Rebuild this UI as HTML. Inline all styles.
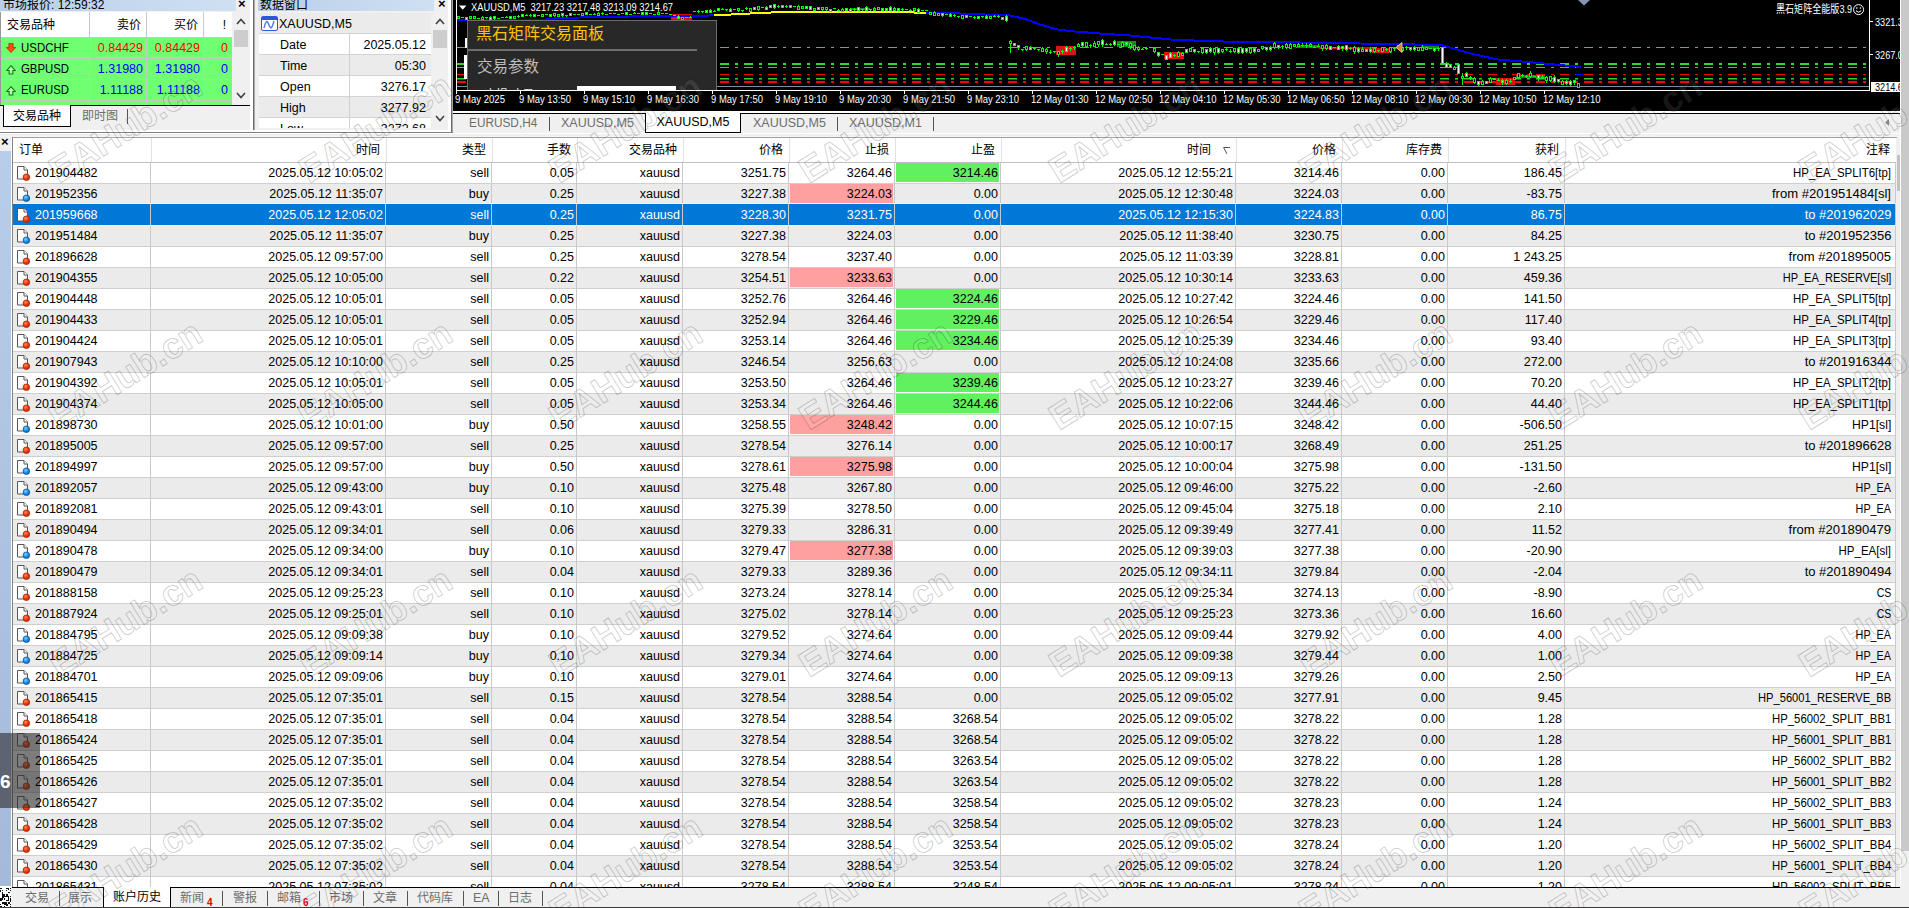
<!DOCTYPE html>
<html lang="zh-CN">
<head>
<meta charset="utf-8">
<title>MetaTrader 4 - 账户历史</title>
<style>
*{box-sizing:border-box;margin:0;padding:0}
html,body{width:1909px;height:908px;overflow:hidden;background:#f0f0f0}
body{position:relative;font-family:"Liberation Sans","Noto Sans CJK SC",sans-serif;font-size:12px;color:#000}
.abs{position:absolute}
i{font-style:normal}
/* ---------- market watch ---------- */
#mw{position:absolute;left:0;top:0;width:250px;height:128px;background:#f0f0f0;overflow:hidden}
.ttl{position:absolute;top:0;height:11px;background:linear-gradient(90deg,#b9cfe8,#cfe0f2);overflow:hidden}
.ttl span{position:absolute;left:3px;top:-3px;font-size:12px;line-height:16px;white-space:nowrap}
.xbtn{position:absolute;font-size:13px;font-weight:bold;line-height:10px;top:-1px;font-family:"Liberation Sans",sans-serif}
#mwt{position:absolute;left:1px;top:12px;width:231px;height:93px;background:#70ff70;overflow:hidden}
#mwt .h{position:absolute;left:0;top:0;width:231px;height:25px;background:#fff}
#mwt .v{position:absolute;top:0;width:1px;height:93px;background:#c8c8c8}
#mwt .hl{position:absolute;left:0;width:231px;height:1px;background:#c8c8c8}
#mwt span{position:absolute;white-space:nowrap;line-height:20px;font-size:12.5px}
#mwt .h span{font-size:12px;line-height:26px}
.red{color:#ff0000}.blu{color:#0000ff}
.sb{position:absolute;background:#f0f0f0}
.sb .th{position:absolute;left:2px;width:14px;background:#cdcdcd}
.sb svg{position:absolute;left:4px}
.tabs{position:absolute;font-size:12px;white-space:nowrap;line-height:20px}
.tabs .t{position:absolute;top:0;color:#6d6d6d;line-height:inherit}
.tabs .a{position:absolute;background:#fff;border:1px solid #000;border-top:none;color:#000;text-align:center;line-height:20px}
.tabs .sp{position:absolute;width:1px;background:#555;}
/* ---------- data window ---------- */
#dw{position:absolute;left:258px;top:0;width:190px;height:128px;overflow:hidden}
#dwt{position:absolute;left:1px;top:13px;width:172px;height:115px;background:#fff;overflow:hidden}
#dwt .rw{position:absolute;left:0;width:172px;height:21px;border-bottom:1px solid #d4d4d4}
#dwt .rw.g{background:#ebebeb}
#dwt .rw span{position:absolute;line-height:22px;font-size:12.5px;white-space:nowrap}
#dwt .vv{position:absolute;left:90px;top:21px;width:1px;height:100px;background:#d0d0d0}
/* ---------- chart ---------- */
#ch{position:absolute;left:453px;top:0;width:1447px;height:111px;background:#000;overflow:hidden}
#ch svg{position:absolute;left:0;top:0}
#pnl{position:absolute;left:14px;top:20px;width:250px;height:70px;background:#282828;border:1px solid #6a6a6a;border-bottom:none;overflow:hidden}
#pnl .t1{position:absolute;left:8px;top:2px;font-size:16px;line-height:22px;color:#ffc400;white-space:nowrap;letter-spacing:0}
#pnl .ln{position:absolute;left:0;top:28px;width:229px;height:2px;background:#6e6e6e}
#pnl .t2{position:absolute;left:9px;top:35px;font-size:15.5px;line-height:22px;color:#bdbdbd;white-space:nowrap}
#pnl .wb{position:absolute;left:109px;top:65px;width:99px;height:6px;background:#fff}
/* ---------- table ---------- */
#tb{position:absolute;left:13px;top:138px;width:1883px;height:749px;background:#fff;overflow:hidden}
.hd{position:absolute;left:0;top:0;width:1883px;height:25px;background:#fff;border-bottom:1px solid #c0c0c0}
.hc{position:absolute;top:0;height:24px;border-right:1px solid #e2e2e2;text-align:right;padding-right:6px;line-height:25px;font-size:12px;white-space:nowrap}
.hc.l{text-align:left;padding-left:6px}
.r{position:absolute;left:0;width:1883px;height:21px;border-bottom:1px solid #cfcfcf;background:#fff}
.r.g{background:#ebebeb}
.r.sel{background:#0078d7;color:#fff;margin-top:-2px;height:23px;border-top:1px solid #f4f0ee;border-bottom:1px solid #f4f0ee}
.r.sel .c{height:21px;padding-top:1px}
.r.sel .ic{top:3px}
.c{position:absolute;top:0;height:20px;border-right:1px solid #c9c9c9;text-align:right;padding-right:2px;line-height:20px;font-size:12.5px;white-space:nowrap;overflow:hidden}
.r.sel .c{border-right-color:#c8c8c8}
.c.o{text-align:left;padding-left:22px}
.c.pk{box-shadow:inset 0 0 0 1px transparent}
.c.pk::before,.c.gn::before{content:"";position:absolute;left:1px;right:1px;top:0;bottom:1px;z-index:0}
.c.pk::before{background:#ffa0a0}
.c.gn::before{background:#60f060}
.c span{position:relative;z-index:1}
.c.cm{padding-right:4px}.c.cm span{display:inline-block;transform-origin:100% 50%}.sx{display:inline-block;transform-origin:0 50%}
.ic{position:absolute;left:3px;top:2px;width:16px;height:16px}
.srt{position:absolute;right:5px;top:9px;width:8px;height:8px}
/* ---------- bottom tabs ---------- */
#bt{position:absolute;left:0;top:887px;width:1909px;height:21px;background:#f0f0f0}
</style>
</head>
<body>
<svg width="0" height="0" style="position:absolute"><defs>
<linearGradient id="pg" x1="0" y1="0" x2="1" y2="1"><stop offset="0.45" stop-color="#fff"/><stop offset="1" stop-color="#dcdcdc"/></linearGradient>
<radialGradient id="rb" cx=".38" cy=".32" r=".7"><stop offset="0" stop-color="#ff8a5a"/><stop offset=".55" stop-color="#ec3c0c"/><stop offset="1" stop-color="#b82400"/></radialGradient>
<radialGradient id="bb" cx=".38" cy=".32" r=".7"><stop offset="0" stop-color="#7fd0ff"/><stop offset=".55" stop-color="#1c92ec"/><stop offset="1" stop-color="#0b5cae"/></radialGradient>
</defs></svg>

<!-- market watch -->
<div id="mw">
  <div class="ttl" style="left:0;width:236px"><span>市场报价: 12:59:32</span></div>
  <div class="xbtn" style="left:238px">×</div>
  <div id="mwt">
    <div class="h"></div>
    <div class="hl" style="top:25px"></div><div class="hl" style="top:46px"></div><div class="hl" style="top:67px"></div><div class="hl" style="top:88px"></div>
    <div class="v" style="left:88px"></div><div class="v" style="left:145px"></div><div class="v" style="left:202px"></div>
    <div class="h" style="background:none"><span style="left:6px">交易品种</span><span style="right:91px">卖价</span><span style="right:34px">买价</span><span style="right:6px">!</span></div>
    <span class="sx" style="left:20px;top:26px;transform:scaleX(.915)">USDCHF</span><span class="red" style="right:89px;top:26px">0.84429</span><span class="red" style="right:32px;top:26px">0.84429</span><span class="red" style="right:4px;top:26px">0</span>
    <span class="sx" style="left:20px;top:47px;transform:scaleX(.91)">GBPUSD</span><span class="blu" style="right:89px;top:47px">1.31980</span><span class="blu" style="right:32px;top:47px">1.31980</span><span class="blu" style="right:4px;top:47px">0</span>
    <span class="sx" style="left:20px;top:68px;transform:scaleX(.91)">EURUSD</span><span class="blu" style="right:89px;top:68px">1.11188</span><span class="blu" style="right:32px;top:68px">1.11188</span><span class="blu" style="right:4px;top:68px">0</span>
    <svg class="abs" style="left:5px;top:31px" width="10" height="10" viewBox="0 0 12 12"><path d="M3.5 0.5h5v5h3L6 11.5 0.5 5.5h3z" fill="#ff4a1a" stroke="#c02000" stroke-width="1"/></svg>
    <svg class="abs" style="left:5px;top:53px" width="10" height="10" viewBox="0 0 12 12"><path d="M6 0.8 11 6.5H8.2v4.2H3.8V6.5H1z" fill="#b6ffb6" stroke="#0a7a0a" stroke-width="1.3"/></svg>
    <svg class="abs" style="left:5px;top:74px" width="10" height="10" viewBox="0 0 12 12"><path d="M6 0.8 11 6.5H8.2v4.2H3.8V6.5H1z" fill="#b6ffb6" stroke="#0a7a0a" stroke-width="1.3"/></svg>
  </div>
  <div class="sb" style="left:232px;top:12px;width:18px;height:93px">
    <svg style="top:6px" width="10" height="7" viewBox="0 0 10 7"><path d="M1 6 5 1.5 9 6" fill="none" stroke="#404040" stroke-width="1.6"/></svg>
    <div class="th" style="top:18px;height:17px"></div>
    <svg style="top:80px" width="10" height="7" viewBox="0 0 10 7"><path d="M1 1 5 5.5 9 1" fill="none" stroke="#404040" stroke-width="1.6"/></svg>
  </div>
  <div class="abs" style="left:0;top:105px;width:250px;height:1px;background:#000"></div>
  <div class="tabs" style="left:0;top:105px;width:250px;height:23px">
    <div class="a" style="left:3px;top:0;width:68px;height:22px;line-height:22px">交易品种</div>
    <div class="t" style="left:82px;line-height:22px">即时图</div>
    <div class="sp" style="left:127px;top:4px;height:15px"></div>
  </div>
</div>
<div class="abs" style="left:0;top:12px;width:1px;height:93px;background:#9a9a9a"></div>
<div class="abs" style="left:250px;top:0;width:3px;height:130px;background:#fff"></div>
<div class="abs" style="left:253px;top:0;width:1px;height:132px;background:#6e6e6e"></div>
<div class="abs" style="left:254px;top:0;width:1px;height:132px;background:#a8a8a8"></div>

<!-- data window -->
<div id="dw">
  <div class="ttl" style="left:0;width:176px"><span style="left:2px">数据窗口</span></div>
  <div class="xbtn" style="left:180px">×</div>
  <div id="dwt">
    <div class="rw g" style="top:0"><span style="left:20px">XAUUSD,M5</span>
      <svg class="abs" style="left:2px;top:3px" width="17" height="15" viewBox="0 0 17 15"><rect x=".5" y=".5" width="16" height="14" rx="1.5" fill="#fff" stroke="#2a5bd7"/><rect x="1" y="1" width="15" height="3" fill="#2a5bd7"/><path d="M3 12c2-8 3-8 5-3s3 3 5-4" fill="none" stroke="#4a7bf0" stroke-width="1.4"/></svg></div>
    <div class="rw" style="top:21px"><span style="left:21px">Date</span><span style="right:5px">2025.05.12</span></div>
    <div class="rw g" style="top:42px"><span style="left:21px">Time</span><span style="right:5px">05:30</span></div>
    <div class="rw" style="top:63px"><span style="left:21px">Open</span><span style="right:5px">3276.17</span></div>
    <div class="rw g" style="top:84px"><span style="left:21px">High</span><span style="right:5px">3277.92</span></div>
    <div class="rw" style="top:105px"><span style="left:21px">Low</span><span style="right:5px">3272.68</span></div>
    <div class="vv"></div>
  </div>
  <div class="sb" style="left:173px;top:12px;width:17px;height:116px">
    <svg style="top:6px" width="10" height="7" viewBox="0 0 10 7"><path d="M1 6 5 1.5 9 6" fill="none" stroke="#404040" stroke-width="1.6"/></svg>
    <div class="th" style="top:18px;height:18px"></div>
    <svg style="top:103px" width="10" height="7" viewBox="0 0 10 7"><path d="M1 1 5 5.5 9 1" fill="none" stroke="#404040" stroke-width="1.6"/></svg>
  </div>
</div>
<div class="abs" style="left:448px;top:0;width:3px;height:130px;background:#fff"></div>
<div class="abs" style="left:451px;top:0;width:1px;height:132px;background:#6e6e6e"></div>
<div class="abs" style="left:452px;top:0;width:1px;height:132px;background:#a8a8a8"></div>
<div class="abs" style="left:0;top:130px;width:451px;height:2px;background:#fff"></div>
<div class="abs" style="left:0;top:132px;width:453px;height:1px;background:#808080"></div>

<!-- chart -->
<div id="ch">
<svg width="1447" height="111" viewBox="0 0 1447 111" shape-rendering="crispEdges" font-family="Liberation Sans, Noto Sans CJK SC, sans-serif">
<line x1="267" y1="47.5" x2="1414" y2="47.5" stroke="#32d232" stroke-width="1" stroke-dasharray="9 6 3 6"/>
<line x1="267" y1="64" x2="1414" y2="64" stroke="#32d232" stroke-width="2" stroke-dasharray="9 6 3 6"/>
<line x1="267" y1="67.5" x2="1414" y2="67.5" stroke="#32d232" stroke-width="1" stroke-dasharray="9 6 3 6"/>
<line x1="267" y1="74.5" x2="1414" y2="74.5" stroke="#ff0000" stroke-width="1" stroke-dasharray="9 6 3 6"/>
<line x1="267" y1="78.5" x2="1414" y2="78.5" stroke="#32d232" stroke-width="1" stroke-dasharray="9 6 3 6"/>
<line x1="267" y1="79.5" x2="1414" y2="79.5" stroke="#ff0000" stroke-width="1" stroke-dasharray="9 6 3 6"/>
<line x1="267" y1="82" x2="1414" y2="82" stroke="#ff0000" stroke-width="2" stroke-dasharray="9 6 3 6"/>
<line x1="4" y1="47.5" x2="13" y2="47.5" stroke="#32d232" stroke-width="1"/>
<line x1="4" y1="64" x2="13" y2="64" stroke="#32d232" stroke-width="2"/>
<line x1="4" y1="67.5" x2="13" y2="67.5" stroke="#32d232" stroke-width="1"/>
<line x1="4" y1="74.5" x2="13" y2="74.5" stroke="#ff0000" stroke-width="1"/>
<line x1="4" y1="78.5" x2="13" y2="78.5" stroke="#32d232" stroke-width="1"/>
<line x1="4" y1="79.5" x2="13" y2="79.5" stroke="#ff0000" stroke-width="1"/>
<line x1="4" y1="82" x2="13" y2="82" stroke="#ff0000" stroke-width="2"/>
<rect x="12" y="38" width="3" height="10" fill="#fff"/><rect x="11" y="55" width="4" height="24" fill="#fff"/>
<line x1="4" y1="86.5" x2="1416" y2="86.5" stroke="#7f8fa6" stroke-width="1"/>
<rect x="218.0" y="14" width="21.0" height="6.5" fill="#e01010"/>
<rect x="603.0" y="46" width="20.0" height="9.0" fill="#d81414"/>
<rect x="664.0" y="40.5" width="19.0" height="6.0" fill="#168a16"/>
<rect x="711.0" y="52" width="20.0" height="6.5" fill="#e01010"/>
<rect x="844.0" y="44.5" width="22.0" height="3.0" fill="#168a16"/>
<rect x="866.0" y="47" width="53.0" height="1.5" fill="#d01010"/>
<rect x="919.0" y="47.5" width="20.0" height="5.0" fill="#e01010"/>
<rect x="968.0" y="45" width="18.0" height="4.0" fill="#168a16"/>
<rect x="1043.0" y="78" width="19.0" height="6.5" fill="#e01010"/>
<rect x="1063.0" y="74.5" width="29.0" height="3.0" fill="#168a16"/>
<rect x="398.0" y="8" width="19.0" height="2.0" fill="#168a16"/>
<polyline points="3.0,19.5 92.0,19.5 107.0,18.0 147.0,17.0 197.0,16.2 247.0,15.7 261.0,15.4" fill="none" stroke="#0000ff" stroke-width="2"/>
<polyline points="261.0,15.4 287.0,14.0 322.0,12.3 397.0,12.0 473.0,12.6" fill="none" stroke="#ffff00" stroke-width="2"/>
<polyline points="473.0,12.6 507.0,13.5 557.0,15.5 572.0,19.0 587.0,24.5 603.0,29.3 622.0,31.5 647.0,33.5 677.0,35.5 721.0,39.8 784.0,42.0 847.0,42.5 907.0,43.5 967.0,44.6 987.0,44.8 1002.0,49.0 1018.0,53.6 1044.0,59.4 1077.0,62.2 1105.0,64.8 1128.0,67.0" fill="none" stroke="#0000ff" stroke-width="2"/>
<line x1="1123" y1="74.5" x2="1131" y2="74.5" stroke="#0000ff" stroke-width="1.4"/>
<line x1="5.5" y1="16.7" x2="5.5" y2="18.7" stroke="#00ff00" stroke-width="1"/>
<rect x="4.5" y="16.7" width="2" height="2.0" fill="#000" stroke="#00ff00" stroke-width="1"/>
<line x1="9.5" y1="17.4" x2="9.5" y2="18.4" stroke="#00ff00" stroke-width="1"/>
<line x1="8.0" y1="17.9" x2="11.0" y2="17.9" stroke="#00ff00" stroke-width="1"/>
<line x1="13.5" y1="17.1" x2="13.5" y2="20.1" stroke="#00ff00" stroke-width="1"/>
<rect x="12.5" y="17.1" width="2" height="2.0" fill="#fff" stroke="#00ff00" stroke-width="1"/>
<line x1="17.5" y1="16.9" x2="17.5" y2="18.9" stroke="#00ff00" stroke-width="1"/>
<rect x="16.5" y="16.9" width="2" height="2.0" fill="#000" stroke="#00ff00" stroke-width="1"/>
<line x1="21.5" y1="16.7" x2="21.5" y2="18.7" stroke="#00ff00" stroke-width="1"/>
<rect x="20.5" y="16.7" width="2" height="2.0" fill="#000" stroke="#00ff00" stroke-width="1"/>
<line x1="25.5" y1="17.5" x2="25.5" y2="18.5" stroke="#00ff00" stroke-width="1"/>
<line x1="24.0" y1="18.0" x2="27.0" y2="18.0" stroke="#00ff00" stroke-width="1"/>
<line x1="29.5" y1="16.1" x2="29.5" y2="19.1" stroke="#00ff00" stroke-width="1"/>
<rect x="28.5" y="17.1" width="2" height="2.0" fill="#000" stroke="#00ff00" stroke-width="1"/>
<line x1="33.5" y1="17.2" x2="33.5" y2="19.2" stroke="#00ff00" stroke-width="1"/>
<line x1="32.0" y1="17.7" x2="35.0" y2="17.7" stroke="#00ff00" stroke-width="1"/>
<line x1="37.5" y1="16.2" x2="37.5" y2="20.2" stroke="#00ff00" stroke-width="1"/>
<rect x="36.5" y="17.2" width="2" height="2.0" fill="#fff" stroke="#00ff00" stroke-width="1"/>
<line x1="41.5" y1="16.6" x2="41.5" y2="19.6" stroke="#00ff00" stroke-width="1"/>
<rect x="40.5" y="16.6" width="2" height="2.0" fill="#fff" stroke="#00ff00" stroke-width="1"/>
<line x1="45.5" y1="17.9" x2="45.5" y2="18.9" stroke="#00ff00" stroke-width="1"/>
<line x1="44.0" y1="18.4" x2="47.0" y2="18.4" stroke="#00ff00" stroke-width="1"/>
<line x1="49.5" y1="17.2" x2="49.5" y2="18.2" stroke="#00ff00" stroke-width="1"/>
<line x1="48.0" y1="17.7" x2="51.0" y2="17.7" stroke="#00ff00" stroke-width="1"/>
<line x1="53.5" y1="16.1" x2="53.5" y2="18.1" stroke="#00ff00" stroke-width="1"/>
<line x1="52.0" y1="17.6" x2="55.0" y2="17.6" stroke="#00ff00" stroke-width="1"/>
<line x1="57.5" y1="16.0" x2="57.5" y2="18.0" stroke="#00ff00" stroke-width="1"/>
<rect x="56.5" y="16.0" width="2" height="2.0" fill="#fff" stroke="#00ff00" stroke-width="1"/>
<line x1="61.5" y1="16.0" x2="61.5" y2="19.0" stroke="#00ff00" stroke-width="1"/>
<rect x="60.5" y="16.0" width="2" height="2.0" fill="#000" stroke="#00ff00" stroke-width="1"/>
<line x1="65.5" y1="14.6" x2="65.5" y2="17.6" stroke="#00ff00" stroke-width="1"/>
<line x1="64.0" y1="16.1" x2="67.0" y2="16.1" stroke="#00ff00" stroke-width="1"/>
<line x1="69.5" y1="14.6" x2="69.5" y2="16.6" stroke="#00ff00" stroke-width="1"/>
<rect x="68.5" y="14.6" width="2" height="2.0" fill="#fff" stroke="#00ff00" stroke-width="1"/>
<line x1="73.5" y1="13.9" x2="73.5" y2="15.9" stroke="#00ff00" stroke-width="1"/>
<line x1="72.0" y1="15.4" x2="75.0" y2="15.4" stroke="#00ff00" stroke-width="1"/>
<line x1="77.5" y1="13.7" x2="77.5" y2="16.7" stroke="#00ff00" stroke-width="1"/>
<line x1="76.0" y1="15.2" x2="79.0" y2="15.2" stroke="#00ff00" stroke-width="1"/>
<line x1="81.5" y1="14.3" x2="81.5" y2="16.3" stroke="#00ff00" stroke-width="1"/>
<rect x="80.5" y="14.3" width="2" height="2.0" fill="#fff" stroke="#00ff00" stroke-width="1"/>
<line x1="85.5" y1="14.8" x2="85.5" y2="15.8" stroke="#00ff00" stroke-width="1"/>
<line x1="84.0" y1="15.3" x2="87.0" y2="15.3" stroke="#00ff00" stroke-width="1"/>
<line x1="89.5" y1="14.1" x2="89.5" y2="16.1" stroke="#00ff00" stroke-width="1"/>
<rect x="88.5" y="14.1" width="2" height="2.0" fill="#000" stroke="#00ff00" stroke-width="1"/>
<line x1="93.5" y1="14.3" x2="93.5" y2="15.3" stroke="#00ff00" stroke-width="1"/>
<line x1="92.0" y1="14.8" x2="95.0" y2="14.8" stroke="#00ff00" stroke-width="1"/>
<line x1="97.5" y1="14.1" x2="97.5" y2="16.1" stroke="#00ff00" stroke-width="1"/>
<rect x="96.5" y="14.1" width="2" height="2.0" fill="#fff" stroke="#00ff00" stroke-width="1"/>
<line x1="101.5" y1="13.5" x2="101.5" y2="16.5" stroke="#00ff00" stroke-width="1"/>
<rect x="100.5" y="13.5" width="2" height="2.0" fill="#000" stroke="#00ff00" stroke-width="1"/>
<line x1="105.5" y1="14.0" x2="105.5" y2="17.0" stroke="#00ff00" stroke-width="1"/>
<rect x="104.5" y="14.0" width="2" height="2.0" fill="#000" stroke="#00ff00" stroke-width="1"/>
<line x1="109.5" y1="12.9" x2="109.5" y2="16.9" stroke="#00ff00" stroke-width="1"/>
<rect x="108.5" y="13.9" width="2" height="2.0" fill="#fff" stroke="#00ff00" stroke-width="1"/>
<line x1="113.5" y1="14.5" x2="113.5" y2="16.5" stroke="#00ff00" stroke-width="1"/>
<line x1="112.0" y1="15.0" x2="115.0" y2="15.0" stroke="#00ff00" stroke-width="1"/>
<line x1="117.5" y1="13.2" x2="117.5" y2="15.2" stroke="#00ff00" stroke-width="1"/>
<rect x="116.5" y="13.2" width="2" height="2.0" fill="#fff" stroke="#00ff00" stroke-width="1"/>
<line x1="121.5" y1="13.9" x2="121.5" y2="14.9" stroke="#00ff00" stroke-width="1"/>
<line x1="120.0" y1="14.4" x2="123.0" y2="14.4" stroke="#00ff00" stroke-width="1"/>
<line x1="125.5" y1="13.9" x2="125.5" y2="14.9" stroke="#00ff00" stroke-width="1"/>
<line x1="124.0" y1="14.4" x2="127.0" y2="14.4" stroke="#00ff00" stroke-width="1"/>
<line x1="129.5" y1="13.3" x2="129.5" y2="16.3" stroke="#00ff00" stroke-width="1"/>
<rect x="128.5" y="13.3" width="2" height="2.0" fill="#000" stroke="#00ff00" stroke-width="1"/>
<line x1="133.5" y1="12.9" x2="133.5" y2="14.9" stroke="#00ff00" stroke-width="1"/>
<rect x="132.5" y="12.9" width="2" height="2.0" fill="#fff" stroke="#00ff00" stroke-width="1"/>
<line x1="137.5" y1="14.0" x2="137.5" y2="15.0" stroke="#00ff00" stroke-width="1"/>
<line x1="136.0" y1="14.5" x2="139.0" y2="14.5" stroke="#00ff00" stroke-width="1"/>
<line x1="141.5" y1="12.8" x2="141.5" y2="14.8" stroke="#00ff00" stroke-width="1"/>
<line x1="140.0" y1="14.3" x2="143.0" y2="14.3" stroke="#00ff00" stroke-width="1"/>
<line x1="145.5" y1="12.0" x2="145.5" y2="15.0" stroke="#00ff00" stroke-width="1"/>
<rect x="144.5" y="13.0" width="2" height="2.0" fill="#000" stroke="#00ff00" stroke-width="1"/>
<line x1="149.5" y1="12.2" x2="149.5" y2="15.2" stroke="#00ff00" stroke-width="1"/>
<line x1="148.0" y1="13.7" x2="151.0" y2="13.7" stroke="#00ff00" stroke-width="1"/>
<line x1="153.5" y1="13.6" x2="153.5" y2="14.6" stroke="#00ff00" stroke-width="1"/>
<line x1="152.0" y1="14.1" x2="155.0" y2="14.1" stroke="#00ff00" stroke-width="1"/>
<line x1="157.5" y1="13.3" x2="157.5" y2="14.3" stroke="#00ff00" stroke-width="1"/>
<line x1="156.0" y1="13.8" x2="159.0" y2="13.8" stroke="#00ff00" stroke-width="1"/>
<line x1="161.5" y1="13.3" x2="161.5" y2="14.3" stroke="#00ff00" stroke-width="1"/>
<line x1="160.0" y1="13.8" x2="163.0" y2="13.8" stroke="#00ff00" stroke-width="1"/>
<line x1="165.5" y1="13.5" x2="165.5" y2="14.5" stroke="#00ff00" stroke-width="1"/>
<line x1="164.0" y1="14.0" x2="167.0" y2="14.0" stroke="#00ff00" stroke-width="1"/>
<line x1="169.5" y1="12.9" x2="169.5" y2="13.9" stroke="#00ff00" stroke-width="1"/>
<line x1="168.0" y1="13.4" x2="171.0" y2="13.4" stroke="#00ff00" stroke-width="1"/>
<line x1="173.5" y1="11.5" x2="173.5" y2="14.5" stroke="#00ff00" stroke-width="1"/>
<rect x="172.5" y="12.5" width="2" height="2.0" fill="#fff" stroke="#00ff00" stroke-width="1"/>
<line x1="177.5" y1="13.5" x2="177.5" y2="14.5" stroke="#00ff00" stroke-width="1"/>
<line x1="176.0" y1="14.0" x2="179.0" y2="14.0" stroke="#00ff00" stroke-width="1"/>
<line x1="181.5" y1="12.0" x2="181.5" y2="14.0" stroke="#00ff00" stroke-width="1"/>
<line x1="180.0" y1="13.5" x2="183.0" y2="13.5" stroke="#00ff00" stroke-width="1"/>
<line x1="185.5" y1="13.1" x2="185.5" y2="14.1" stroke="#00ff00" stroke-width="1"/>
<line x1="184.0" y1="13.6" x2="187.0" y2="13.6" stroke="#00ff00" stroke-width="1"/>
<line x1="189.5" y1="12.4" x2="189.5" y2="14.4" stroke="#00ff00" stroke-width="1"/>
<rect x="188.5" y="12.4" width="2" height="2.0" fill="#fff" stroke="#00ff00" stroke-width="1"/>
<line x1="193.5" y1="12.2" x2="193.5" y2="15.2" stroke="#00ff00" stroke-width="1"/>
<rect x="192.5" y="12.2" width="2" height="2.0" fill="#fff" stroke="#00ff00" stroke-width="1"/>
<line x1="197.5" y1="13.0" x2="197.5" y2="14.0" stroke="#00ff00" stroke-width="1"/>
<line x1="196.0" y1="13.5" x2="199.0" y2="13.5" stroke="#00ff00" stroke-width="1"/>
<line x1="201.5" y1="13.5" x2="201.5" y2="14.5" stroke="#00ff00" stroke-width="1"/>
<line x1="200.0" y1="14.0" x2="203.0" y2="14.0" stroke="#00ff00" stroke-width="1"/>
<line x1="205.5" y1="11.3" x2="205.5" y2="14.3" stroke="#00ff00" stroke-width="1"/>
<rect x="204.5" y="12.3" width="2" height="2.0" fill="#000" stroke="#00ff00" stroke-width="1"/>
<line x1="209.5" y1="13.0" x2="209.5" y2="14.0" stroke="#00ff00" stroke-width="1"/>
<line x1="208.0" y1="13.5" x2="211.0" y2="13.5" stroke="#00ff00" stroke-width="1"/>
<line x1="213.5" y1="13.0" x2="213.5" y2="14.0" stroke="#00ff00" stroke-width="1"/>
<line x1="212.0" y1="13.5" x2="215.0" y2="13.5" stroke="#00ff00" stroke-width="1"/>
<line x1="217.5" y1="13.5" x2="217.5" y2="14.5" stroke="#00ff00" stroke-width="1"/>
<line x1="216.0" y1="14.0" x2="219.0" y2="14.0" stroke="#00ff00" stroke-width="1"/>
<line x1="221.5" y1="15.0" x2="221.5" y2="16.0" stroke="#00ff00" stroke-width="1"/>
<line x1="220.0" y1="15.5" x2="223.0" y2="15.5" stroke="#00ff00" stroke-width="1"/>
<line x1="225.5" y1="15.4" x2="225.5" y2="18.4" stroke="#00ff00" stroke-width="1"/>
<rect x="224.5" y="16.4" width="2" height="2.0" fill="#fff" stroke="#00ff00" stroke-width="1"/>
<line x1="229.5" y1="17.0" x2="229.5" y2="19.0" stroke="#00ff00" stroke-width="1"/>
<rect x="228.5" y="17.0" width="2" height="2.0" fill="#000" stroke="#00ff00" stroke-width="1"/>
<line x1="233.5" y1="16.5" x2="233.5" y2="17.5" stroke="#00ff00" stroke-width="1"/>
<line x1="232.0" y1="17.0" x2="235.0" y2="17.0" stroke="#00ff00" stroke-width="1"/>
<line x1="237.5" y1="15.5" x2="237.5" y2="17.5" stroke="#00ff00" stroke-width="1"/>
<line x1="236.0" y1="17.0" x2="239.0" y2="17.0" stroke="#00ff00" stroke-width="1"/>
<line x1="241.5" y1="10.7" x2="241.5" y2="11.7" stroke="#00ff00" stroke-width="1"/>
<line x1="240.0" y1="11.2" x2="243.0" y2="11.2" stroke="#00ff00" stroke-width="1"/>
<line x1="245.5" y1="9.6" x2="245.5" y2="12.6" stroke="#00ff00" stroke-width="1"/>
<line x1="244.0" y1="11.1" x2="247.0" y2="11.1" stroke="#00ff00" stroke-width="1"/>
<line x1="249.5" y1="11.2" x2="249.5" y2="13.2" stroke="#00ff00" stroke-width="1"/>
<line x1="248.0" y1="11.7" x2="251.0" y2="11.7" stroke="#00ff00" stroke-width="1"/>
<line x1="253.5" y1="10.2" x2="253.5" y2="13.2" stroke="#00ff00" stroke-width="1"/>
<rect x="252.5" y="10.2" width="2" height="2.0" fill="#fff" stroke="#00ff00" stroke-width="1"/>
<line x1="257.5" y1="9.0" x2="257.5" y2="13.0" stroke="#00ff00" stroke-width="1"/>
<rect x="256.5" y="10.0" width="2" height="2.0" fill="#fff" stroke="#00ff00" stroke-width="1"/>
<line x1="261.5" y1="9.6" x2="261.5" y2="11.6" stroke="#00ff00" stroke-width="1"/>
<line x1="260.0" y1="11.1" x2="263.0" y2="11.1" stroke="#00ff00" stroke-width="1"/>
<line x1="265.5" y1="8.7" x2="265.5" y2="10.7" stroke="#00ff00" stroke-width="1"/>
<rect x="264.5" y="8.7" width="2" height="2.0" fill="#fff" stroke="#00ff00" stroke-width="1"/>
<line x1="269.5" y1="8.1" x2="269.5" y2="10.1" stroke="#00ff00" stroke-width="1"/>
<line x1="268.0" y1="9.6" x2="271.0" y2="9.6" stroke="#00ff00" stroke-width="1"/>
<line x1="273.5" y1="9.3" x2="273.5" y2="11.3" stroke="#00ff00" stroke-width="1"/>
<line x1="272.0" y1="9.8" x2="275.0" y2="9.8" stroke="#00ff00" stroke-width="1"/>
<line x1="277.5" y1="8.0" x2="277.5" y2="12.0" stroke="#00ff00" stroke-width="1"/>
<rect x="276.5" y="9.0" width="2" height="2.0" fill="#fff" stroke="#00ff00" stroke-width="1"/>
<line x1="281.5" y1="9.2" x2="281.5" y2="10.2" stroke="#00ff00" stroke-width="1"/>
<line x1="280.0" y1="9.7" x2="283.0" y2="9.7" stroke="#00ff00" stroke-width="1"/>
<line x1="285.5" y1="8.5" x2="285.5" y2="11.5" stroke="#00ff00" stroke-width="1"/>
<rect x="284.5" y="8.5" width="2" height="2.0" fill="#000" stroke="#00ff00" stroke-width="1"/>
<line x1="289.5" y1="9.8" x2="289.5" y2="11.8" stroke="#00ff00" stroke-width="1"/>
<line x1="288.0" y1="10.3" x2="291.0" y2="10.3" stroke="#00ff00" stroke-width="1"/>
<line x1="293.5" y1="7.4" x2="293.5" y2="10.4" stroke="#00ff00" stroke-width="1"/>
<line x1="292.0" y1="8.9" x2="295.0" y2="8.9" stroke="#00ff00" stroke-width="1"/>
<line x1="297.5" y1="8.6" x2="297.5" y2="11.6" stroke="#00ff00" stroke-width="1"/>
<rect x="296.5" y="8.6" width="2" height="3.0" fill="#000" stroke="#00ff00" stroke-width="1"/>
<line x1="301.5" y1="7.8" x2="301.5" y2="9.8" stroke="#00ff00" stroke-width="1"/>
<rect x="300.5" y="7.8" width="2" height="2.0" fill="#fff" stroke="#00ff00" stroke-width="1"/>
<line x1="305.5" y1="5.8" x2="305.5" y2="10.8" stroke="#00ff00" stroke-width="1"/>
<rect x="304.5" y="6.8" width="2" height="3.0" fill="#000" stroke="#00ff00" stroke-width="1"/>
<line x1="309.5" y1="7.1" x2="309.5" y2="8.1" stroke="#00ff00" stroke-width="1"/>
<line x1="308.0" y1="7.6" x2="311.0" y2="7.6" stroke="#00ff00" stroke-width="1"/>
<line x1="313.5" y1="6.3" x2="313.5" y2="10.3" stroke="#00ff00" stroke-width="1"/>
<rect x="312.5" y="7.3" width="2" height="2.0" fill="#fff" stroke="#00ff00" stroke-width="1"/>
<line x1="317.5" y1="5.4" x2="317.5" y2="8.4" stroke="#00ff00" stroke-width="1"/>
<rect x="316.5" y="5.4" width="2" height="2.0" fill="#fff" stroke="#00ff00" stroke-width="1"/>
<line x1="321.5" y1="3.9" x2="321.5" y2="8.9" stroke="#00ff00" stroke-width="1"/>
<rect x="320.5" y="4.9" width="2" height="3.0" fill="#fff" stroke="#00ff00" stroke-width="1"/>
<line x1="325.5" y1="5.3" x2="325.5" y2="8.3" stroke="#00ff00" stroke-width="1"/>
<line x1="324.0" y1="6.8" x2="327.0" y2="6.8" stroke="#00ff00" stroke-width="1"/>
<line x1="329.5" y1="5.4" x2="329.5" y2="8.4" stroke="#00ff00" stroke-width="1"/>
<rect x="328.5" y="5.4" width="2" height="2.0" fill="#fff" stroke="#00ff00" stroke-width="1"/>
<line x1="333.5" y1="5.0" x2="333.5" y2="8.0" stroke="#00ff00" stroke-width="1"/>
<line x1="332.0" y1="6.5" x2="335.0" y2="6.5" stroke="#00ff00" stroke-width="1"/>
<line x1="337.5" y1="5.5" x2="337.5" y2="7.5" stroke="#00ff00" stroke-width="1"/>
<rect x="336.5" y="5.5" width="2" height="2.0" fill="#fff" stroke="#00ff00" stroke-width="1"/>
<line x1="341.5" y1="6.1" x2="341.5" y2="7.1" stroke="#00ff00" stroke-width="1"/>
<line x1="340.0" y1="6.6" x2="343.0" y2="6.6" stroke="#00ff00" stroke-width="1"/>
<line x1="345.5" y1="5.1" x2="345.5" y2="10.1" stroke="#00ff00" stroke-width="1"/>
<rect x="344.5" y="6.1" width="2" height="3.0" fill="#000" stroke="#00ff00" stroke-width="1"/>
<line x1="349.5" y1="5.8" x2="349.5" y2="8.8" stroke="#00ff00" stroke-width="1"/>
<rect x="348.5" y="6.8" width="2" height="2.0" fill="#000" stroke="#00ff00" stroke-width="1"/>
<line x1="353.5" y1="5.7" x2="353.5" y2="8.7" stroke="#00ff00" stroke-width="1"/>
<rect x="352.5" y="6.7" width="2" height="2.0" fill="#fff" stroke="#00ff00" stroke-width="1"/>
<line x1="357.5" y1="5.8" x2="357.5" y2="9.8" stroke="#00ff00" stroke-width="1"/>
<rect x="356.5" y="6.8" width="2" height="3.0" fill="#fff" stroke="#00ff00" stroke-width="1"/>
<line x1="361.5" y1="8.0" x2="361.5" y2="11.0" stroke="#00ff00" stroke-width="1"/>
<rect x="360.5" y="8.0" width="2" height="2.0" fill="#000" stroke="#00ff00" stroke-width="1"/>
<line x1="365.5" y1="6.6" x2="365.5" y2="9.6" stroke="#00ff00" stroke-width="1"/>
<rect x="364.5" y="7.6" width="2" height="2.0" fill="#fff" stroke="#00ff00" stroke-width="1"/>
<line x1="369.5" y1="7.8" x2="369.5" y2="10.8" stroke="#00ff00" stroke-width="1"/>
<rect x="368.5" y="7.8" width="2" height="2.0" fill="#000" stroke="#00ff00" stroke-width="1"/>
<line x1="373.5" y1="7.8" x2="373.5" y2="10.8" stroke="#00ff00" stroke-width="1"/>
<rect x="372.5" y="7.8" width="2" height="2.0" fill="#000" stroke="#00ff00" stroke-width="1"/>
<line x1="377.5" y1="9.3" x2="377.5" y2="12.3" stroke="#00ff00" stroke-width="1"/>
<rect x="376.5" y="9.3" width="2" height="2.0" fill="#fff" stroke="#00ff00" stroke-width="1"/>
<line x1="381.5" y1="8.0" x2="381.5" y2="9.0" stroke="#00ff00" stroke-width="1"/>
<line x1="380.0" y1="8.5" x2="383.0" y2="8.5" stroke="#00ff00" stroke-width="1"/>
<line x1="385.5" y1="8.7" x2="385.5" y2="10.7" stroke="#00ff00" stroke-width="1"/>
<line x1="384.0" y1="10.2" x2="387.0" y2="10.2" stroke="#00ff00" stroke-width="1"/>
<line x1="389.5" y1="8.3" x2="389.5" y2="12.3" stroke="#00ff00" stroke-width="1"/>
<rect x="388.5" y="9.3" width="2" height="2.0" fill="#000" stroke="#00ff00" stroke-width="1"/>
<line x1="393.5" y1="8.2" x2="393.5" y2="11.2" stroke="#00ff00" stroke-width="1"/>
<rect x="392.5" y="8.2" width="2" height="2.0" fill="#fff" stroke="#00ff00" stroke-width="1"/>
<line x1="397.5" y1="8.1" x2="397.5" y2="12.1" stroke="#00ff00" stroke-width="1"/>
<rect x="396.5" y="9.1" width="2" height="2.0" fill="#fff" stroke="#00ff00" stroke-width="1"/>
<line x1="401.5" y1="8.2" x2="401.5" y2="11.2" stroke="#00ff00" stroke-width="1"/>
<line x1="400.0" y1="9.7" x2="403.0" y2="9.7" stroke="#00ff00" stroke-width="1"/>
<line x1="405.5" y1="6.7" x2="405.5" y2="10.7" stroke="#00ff00" stroke-width="1"/>
<rect x="404.5" y="7.7" width="2" height="3.0" fill="#fff" stroke="#00ff00" stroke-width="1"/>
<line x1="409.5" y1="8.6" x2="409.5" y2="10.6" stroke="#00ff00" stroke-width="1"/>
<line x1="408.0" y1="9.1" x2="411.0" y2="9.1" stroke="#00ff00" stroke-width="1"/>
<line x1="413.5" y1="6.3" x2="413.5" y2="11.3" stroke="#00ff00" stroke-width="1"/>
<rect x="412.5" y="7.3" width="2" height="3.0" fill="#fff" stroke="#00ff00" stroke-width="1"/>
<line x1="417.5" y1="9.0" x2="417.5" y2="11.0" stroke="#00ff00" stroke-width="1"/>
<line x1="416.0" y1="9.5" x2="419.0" y2="9.5" stroke="#00ff00" stroke-width="1"/>
<line x1="421.5" y1="7.0" x2="421.5" y2="10.0" stroke="#00ff00" stroke-width="1"/>
<rect x="420.5" y="8.0" width="2" height="2.0" fill="#000" stroke="#00ff00" stroke-width="1"/>
<line x1="425.5" y1="7.4" x2="425.5" y2="10.4" stroke="#00ff00" stroke-width="1"/>
<rect x="424.5" y="7.4" width="2" height="2.0" fill="#000" stroke="#00ff00" stroke-width="1"/>
<line x1="429.5" y1="8.0" x2="429.5" y2="10.0" stroke="#00ff00" stroke-width="1"/>
<rect x="428.5" y="8.0" width="2" height="2.0" fill="#fff" stroke="#00ff00" stroke-width="1"/>
<line x1="433.5" y1="8.5" x2="433.5" y2="10.5" stroke="#00ff00" stroke-width="1"/>
<rect x="432.5" y="8.5" width="2" height="2.0" fill="#fff" stroke="#00ff00" stroke-width="1"/>
<line x1="437.5" y1="6.0" x2="437.5" y2="10.0" stroke="#00ff00" stroke-width="1"/>
<rect x="436.5" y="7.0" width="2" height="3.0" fill="#fff" stroke="#00ff00" stroke-width="1"/>
<line x1="441.5" y1="7.3" x2="441.5" y2="11.3" stroke="#00ff00" stroke-width="1"/>
<rect x="440.5" y="8.3" width="2" height="2.0" fill="#000" stroke="#00ff00" stroke-width="1"/>
<line x1="445.5" y1="8.3" x2="445.5" y2="10.3" stroke="#00ff00" stroke-width="1"/>
<rect x="444.5" y="8.3" width="2" height="2.0" fill="#fff" stroke="#00ff00" stroke-width="1"/>
<line x1="449.5" y1="7.5" x2="449.5" y2="10.5" stroke="#00ff00" stroke-width="1"/>
<line x1="448.0" y1="9.0" x2="451.0" y2="9.0" stroke="#00ff00" stroke-width="1"/>
<line x1="453.5" y1="9.4" x2="453.5" y2="10.4" stroke="#00ff00" stroke-width="1"/>
<line x1="452.0" y1="9.9" x2="455.0" y2="9.9" stroke="#00ff00" stroke-width="1"/>
<line x1="457.5" y1="9.1" x2="457.5" y2="11.1" stroke="#00ff00" stroke-width="1"/>
<line x1="456.0" y1="10.6" x2="459.0" y2="10.6" stroke="#00ff00" stroke-width="1"/>
<line x1="461.5" y1="8.5" x2="461.5" y2="11.5" stroke="#00ff00" stroke-width="1"/>
<rect x="460.5" y="8.5" width="2" height="2.0" fill="#000" stroke="#00ff00" stroke-width="1"/>
<line x1="465.5" y1="8.3" x2="465.5" y2="12.3" stroke="#00ff00" stroke-width="1"/>
<rect x="464.5" y="9.3" width="2" height="3.0" fill="#fff" stroke="#00ff00" stroke-width="1"/>
<line x1="469.5" y1="9.5" x2="469.5" y2="10.5" stroke="#00ff00" stroke-width="1"/>
<line x1="468.0" y1="10.0" x2="471.0" y2="10.0" stroke="#00ff00" stroke-width="1"/>
<line x1="473.5" y1="9.8" x2="473.5" y2="10.8" stroke="#00ff00" stroke-width="1"/>
<line x1="472.0" y1="10.3" x2="475.0" y2="10.3" stroke="#00ff00" stroke-width="1"/>
<line x1="477.5" y1="12.1" x2="477.5" y2="14.1" stroke="#00ff00" stroke-width="1"/>
<rect x="476.5" y="12.1" width="2" height="2.0" fill="#000" stroke="#00ff00" stroke-width="1"/>
<line x1="481.5" y1="11.1" x2="481.5" y2="16.1" stroke="#00ff00" stroke-width="1"/>
<rect x="480.5" y="12.1" width="2" height="3.0" fill="#000" stroke="#00ff00" stroke-width="1"/>
<line x1="485.5" y1="13.2" x2="485.5" y2="16.2" stroke="#00ff00" stroke-width="1"/>
<rect x="484.5" y="13.2" width="2" height="2.0" fill="#000" stroke="#00ff00" stroke-width="1"/>
<line x1="489.5" y1="13.9" x2="489.5" y2="16.9" stroke="#00ff00" stroke-width="1"/>
<rect x="488.5" y="13.9" width="2" height="2.0" fill="#fff" stroke="#00ff00" stroke-width="1"/>
<line x1="493.5" y1="14.1" x2="493.5" y2="15.1" stroke="#00ff00" stroke-width="1"/>
<line x1="492.0" y1="14.6" x2="495.0" y2="14.6" stroke="#00ff00" stroke-width="1"/>
<line x1="497.5" y1="13.0" x2="497.5" y2="16.0" stroke="#00ff00" stroke-width="1"/>
<rect x="496.5" y="14.0" width="2" height="2.0" fill="#fff" stroke="#00ff00" stroke-width="1"/>
<line x1="501.5" y1="14.1" x2="501.5" y2="17.1" stroke="#00ff00" stroke-width="1"/>
<line x1="500.0" y1="15.6" x2="503.0" y2="15.6" stroke="#00ff00" stroke-width="1"/>
<line x1="505.5" y1="16.4" x2="505.5" y2="18.4" stroke="#00ff00" stroke-width="1"/>
<line x1="504.0" y1="16.9" x2="507.0" y2="16.9" stroke="#00ff00" stroke-width="1"/>
<line x1="509.5" y1="15.3" x2="509.5" y2="18.3" stroke="#00ff00" stroke-width="1"/>
<rect x="508.5" y="15.3" width="2" height="3.0" fill="#000" stroke="#00ff00" stroke-width="1"/>
<line x1="513.5" y1="15.9" x2="513.5" y2="17.9" stroke="#00ff00" stroke-width="1"/>
<rect x="512.5" y="15.9" width="2" height="2.0" fill="#fff" stroke="#00ff00" stroke-width="1"/>
<line x1="517.5" y1="16.3" x2="517.5" y2="17.3" stroke="#00ff00" stroke-width="1"/>
<line x1="516.0" y1="16.8" x2="519.0" y2="16.8" stroke="#00ff00" stroke-width="1"/>
<line x1="521.5" y1="15.5" x2="521.5" y2="18.5" stroke="#00ff00" stroke-width="1"/>
<line x1="520.0" y1="17.0" x2="523.0" y2="17.0" stroke="#00ff00" stroke-width="1"/>
<line x1="525.5" y1="16.2" x2="525.5" y2="19.2" stroke="#00ff00" stroke-width="1"/>
<rect x="524.5" y="16.2" width="2" height="2.0" fill="#fff" stroke="#00ff00" stroke-width="1"/>
<line x1="529.5" y1="16.3" x2="529.5" y2="18.3" stroke="#00ff00" stroke-width="1"/>
<line x1="528.0" y1="16.8" x2="531.0" y2="16.8" stroke="#00ff00" stroke-width="1"/>
<line x1="533.5" y1="15.0" x2="533.5" y2="18.0" stroke="#00ff00" stroke-width="1"/>
<rect x="532.5" y="16.0" width="2" height="2.0" fill="#fff" stroke="#00ff00" stroke-width="1"/>
<line x1="537.5" y1="16.0" x2="537.5" y2="18.0" stroke="#00ff00" stroke-width="1"/>
<rect x="536.5" y="16.0" width="2" height="2.0" fill="#000" stroke="#00ff00" stroke-width="1"/>
<line x1="541.5" y1="15.0" x2="541.5" y2="17.0" stroke="#00ff00" stroke-width="1"/>
<line x1="540.0" y1="16.5" x2="543.0" y2="16.5" stroke="#00ff00" stroke-width="1"/>
<line x1="545.5" y1="15.1" x2="545.5" y2="18.1" stroke="#00ff00" stroke-width="1"/>
<line x1="544.0" y1="16.6" x2="547.0" y2="16.6" stroke="#00ff00" stroke-width="1"/>
<line x1="549.5" y1="16.7" x2="549.5" y2="19.7" stroke="#00ff00" stroke-width="1"/>
<rect x="548.5" y="17.7" width="2" height="2.0" fill="#fff" stroke="#00ff00" stroke-width="1"/>
<line x1="553.5" y1="14.7" x2="553.5" y2="21.7" stroke="#00ff00" stroke-width="1"/>
<rect x="552.5" y="16.7" width="2" height="4.0" fill="#fff" stroke="#00ff00" stroke-width="1"/>
<line x1="557.5" y1="40.0" x2="557.5" y2="53.0" stroke="#00ff00" stroke-width="1"/>
<rect x="556.5" y="41.0" width="2" height="2.0" fill="#000" stroke="#00ff00" stroke-width="1"/>
<line x1="561.5" y1="43.2" x2="561.5" y2="46.2" stroke="#00ff00" stroke-width="1"/>
<rect x="560.5" y="43.2" width="2" height="2.0" fill="#fff" stroke="#00ff00" stroke-width="1"/>
<line x1="565.5" y1="44.6" x2="565.5" y2="49.6" stroke="#00ff00" stroke-width="1"/>
<rect x="564.5" y="45.6" width="2" height="2.0" fill="#fff" stroke="#00ff00" stroke-width="1"/>
<line x1="569.5" y1="48.9" x2="569.5" y2="50.9" stroke="#00ff00" stroke-width="1"/>
<line x1="568.0" y1="49.4" x2="571.0" y2="49.4" stroke="#00ff00" stroke-width="1"/>
<line x1="573.5" y1="46.8" x2="573.5" y2="50.8" stroke="#00ff00" stroke-width="1"/>
<rect x="572.5" y="46.8" width="2" height="3.0" fill="#000" stroke="#00ff00" stroke-width="1"/>
<line x1="577.5" y1="46.3" x2="577.5" y2="50.3" stroke="#00ff00" stroke-width="1"/>
<rect x="576.5" y="47.3" width="2" height="2.0" fill="#fff" stroke="#00ff00" stroke-width="1"/>
<line x1="581.5" y1="47.0" x2="581.5" y2="50.0" stroke="#00ff00" stroke-width="1"/>
<line x1="580.0" y1="48.5" x2="583.0" y2="48.5" stroke="#00ff00" stroke-width="1"/>
<line x1="585.5" y1="49.0" x2="585.5" y2="51.0" stroke="#00ff00" stroke-width="1"/>
<line x1="584.0" y1="49.5" x2="587.0" y2="49.5" stroke="#00ff00" stroke-width="1"/>
<line x1="589.5" y1="47.4" x2="589.5" y2="51.4" stroke="#00ff00" stroke-width="1"/>
<rect x="588.5" y="48.4" width="2" height="3.0" fill="#000" stroke="#00ff00" stroke-width="1"/>
<line x1="593.5" y1="47.6" x2="593.5" y2="53.6" stroke="#00ff00" stroke-width="1"/>
<rect x="592.5" y="49.6" width="2" height="2.0" fill="#000" stroke="#00ff00" stroke-width="1"/>
<line x1="597.5" y1="50.3" x2="597.5" y2="54.3" stroke="#00ff00" stroke-width="1"/>
<line x1="596.0" y1="52.8" x2="599.0" y2="52.8" stroke="#00ff00" stroke-width="1"/>
<line x1="601.5" y1="51.1" x2="601.5" y2="53.1" stroke="#00ff00" stroke-width="1"/>
<line x1="600.0" y1="51.6" x2="603.0" y2="51.6" stroke="#00ff00" stroke-width="1"/>
<line x1="605.5" y1="50.5" x2="605.5" y2="56.5" stroke="#00ff00" stroke-width="1"/>
<rect x="604.5" y="51.5" width="2" height="3.0" fill="#000" stroke="#00ff00" stroke-width="1"/>
<line x1="609.5" y1="50.3" x2="609.5" y2="54.3" stroke="#00ff00" stroke-width="1"/>
<line x1="608.0" y1="51.8" x2="611.0" y2="51.8" stroke="#00ff00" stroke-width="1"/>
<line x1="613.5" y1="46.4" x2="613.5" y2="52.4" stroke="#00ff00" stroke-width="1"/>
<rect x="612.5" y="47.4" width="2" height="4.0" fill="#fff" stroke="#00ff00" stroke-width="1"/>
<line x1="617.5" y1="46.6" x2="617.5" y2="50.6" stroke="#00ff00" stroke-width="1"/>
<line x1="616.0" y1="48.1" x2="619.0" y2="48.1" stroke="#00ff00" stroke-width="1"/>
<line x1="621.5" y1="46.4" x2="621.5" y2="50.4" stroke="#00ff00" stroke-width="1"/>
<line x1="620.0" y1="47.9" x2="623.0" y2="47.9" stroke="#00ff00" stroke-width="1"/>
<line x1="625.5" y1="43.3" x2="625.5" y2="47.3" stroke="#00ff00" stroke-width="1"/>
<rect x="624.5" y="44.3" width="2" height="2.0" fill="#000" stroke="#00ff00" stroke-width="1"/>
<line x1="629.5" y1="42.3" x2="629.5" y2="47.3" stroke="#00ff00" stroke-width="1"/>
<rect x="628.5" y="42.3" width="2" height="3.0" fill="#fff" stroke="#00ff00" stroke-width="1"/>
<line x1="633.5" y1="42.4" x2="633.5" y2="46.4" stroke="#00ff00" stroke-width="1"/>
<rect x="632.5" y="42.4" width="2" height="4.0" fill="#000" stroke="#00ff00" stroke-width="1"/>
<line x1="637.5" y1="44.3" x2="637.5" y2="48.3" stroke="#00ff00" stroke-width="1"/>
<line x1="636.0" y1="45.8" x2="639.0" y2="45.8" stroke="#00ff00" stroke-width="1"/>
<line x1="641.5" y1="41.4" x2="641.5" y2="47.4" stroke="#00ff00" stroke-width="1"/>
<rect x="640.5" y="43.4" width="2" height="3.0" fill="#000" stroke="#00ff00" stroke-width="1"/>
<line x1="645.5" y1="41.5" x2="645.5" y2="46.5" stroke="#00ff00" stroke-width="1"/>
<rect x="644.5" y="41.5" width="2" height="3.0" fill="#000" stroke="#00ff00" stroke-width="1"/>
<line x1="649.5" y1="38.6" x2="649.5" y2="46.6" stroke="#00ff00" stroke-width="1"/>
<rect x="648.5" y="40.6" width="2" height="4.0" fill="#fff" stroke="#00ff00" stroke-width="1"/>
<line x1="653.5" y1="42.6" x2="653.5" y2="44.6" stroke="#00ff00" stroke-width="1"/>
<line x1="652.0" y1="44.1" x2="655.0" y2="44.1" stroke="#00ff00" stroke-width="1"/>
<line x1="657.5" y1="42.8" x2="657.5" y2="45.8" stroke="#00ff00" stroke-width="1"/>
<line x1="656.0" y1="44.3" x2="659.0" y2="44.3" stroke="#00ff00" stroke-width="1"/>
<line x1="661.5" y1="39.6" x2="661.5" y2="45.6" stroke="#00ff00" stroke-width="1"/>
<rect x="660.5" y="41.6" width="2" height="3.0" fill="#fff" stroke="#00ff00" stroke-width="1"/>
<line x1="665.5" y1="43.6" x2="665.5" y2="44.6" stroke="#00ff00" stroke-width="1"/>
<line x1="664.0" y1="44.1" x2="667.0" y2="44.1" stroke="#00ff00" stroke-width="1"/>
<line x1="669.5" y1="41.1" x2="669.5" y2="47.1" stroke="#00ff00" stroke-width="1"/>
<rect x="668.5" y="42.1" width="2" height="4.0" fill="#000" stroke="#00ff00" stroke-width="1"/>
<line x1="673.5" y1="41.6" x2="673.5" y2="45.6" stroke="#00ff00" stroke-width="1"/>
<rect x="672.5" y="42.6" width="2" height="2.0" fill="#fff" stroke="#00ff00" stroke-width="1"/>
<line x1="677.5" y1="41.7" x2="677.5" y2="48.7" stroke="#00ff00" stroke-width="1"/>
<rect x="676.5" y="43.7" width="2" height="3.0" fill="#000" stroke="#00ff00" stroke-width="1"/>
<line x1="681.5" y1="45.2" x2="681.5" y2="51.2" stroke="#00ff00" stroke-width="1"/>
<rect x="680.5" y="45.2" width="2" height="4.0" fill="#000" stroke="#00ff00" stroke-width="1"/>
<line x1="685.5" y1="46.1" x2="685.5" y2="51.1" stroke="#00ff00" stroke-width="1"/>
<rect x="684.5" y="47.1" width="2" height="2.0" fill="#000" stroke="#00ff00" stroke-width="1"/>
<line x1="689.5" y1="47.7" x2="689.5" y2="49.7" stroke="#00ff00" stroke-width="1"/>
<line x1="688.0" y1="49.2" x2="691.0" y2="49.2" stroke="#00ff00" stroke-width="1"/>
<line x1="693.5" y1="46.7" x2="693.5" y2="49.7" stroke="#00ff00" stroke-width="1"/>
<line x1="692.0" y1="48.2" x2="695.0" y2="48.2" stroke="#00ff00" stroke-width="1"/>
<line x1="697.5" y1="46.6" x2="697.5" y2="47.6" stroke="#00ff00" stroke-width="1"/>
<line x1="696.0" y1="47.1" x2="699.0" y2="47.1" stroke="#00ff00" stroke-width="1"/>
<line x1="701.5" y1="47.6" x2="701.5" y2="52.6" stroke="#00ff00" stroke-width="1"/>
<rect x="700.5" y="48.6" width="2" height="3.0" fill="#000" stroke="#00ff00" stroke-width="1"/>
<line x1="705.5" y1="52.1" x2="705.5" y2="57.1" stroke="#00ff00" stroke-width="1"/>
<rect x="704.5" y="52.1" width="2" height="3.0" fill="#fff" stroke="#00ff00" stroke-width="1"/>
<line x1="709.5" y1="54.2" x2="709.5" y2="55.2" stroke="#00ff00" stroke-width="1"/>
<line x1="708.0" y1="54.7" x2="711.0" y2="54.7" stroke="#00ff00" stroke-width="1"/>
<line x1="713.5" y1="55.2" x2="713.5" y2="60.2" stroke="#00ff00" stroke-width="1"/>
<rect x="712.5" y="55.2" width="2" height="4.0" fill="#fff" stroke="#00ff00" stroke-width="1"/>
<line x1="717.5" y1="52.4" x2="717.5" y2="58.4" stroke="#00ff00" stroke-width="1"/>
<rect x="716.5" y="53.4" width="2" height="4.0" fill="#fff" stroke="#00ff00" stroke-width="1"/>
<line x1="721.5" y1="54.1" x2="721.5" y2="57.1" stroke="#00ff00" stroke-width="1"/>
<line x1="720.0" y1="55.6" x2="723.0" y2="55.6" stroke="#00ff00" stroke-width="1"/>
<line x1="725.5" y1="51.3" x2="725.5" y2="57.3" stroke="#00ff00" stroke-width="1"/>
<rect x="724.5" y="52.3" width="2" height="4.0" fill="#000" stroke="#00ff00" stroke-width="1"/>
<line x1="729.5" y1="52.0" x2="729.5" y2="55.0" stroke="#00ff00" stroke-width="1"/>
<rect x="728.5" y="53.0" width="2" height="2.0" fill="#000" stroke="#00ff00" stroke-width="1"/>
<line x1="733.5" y1="49.1" x2="733.5" y2="53.1" stroke="#00ff00" stroke-width="1"/>
<rect x="732.5" y="49.1" width="2" height="3.0" fill="#fff" stroke="#00ff00" stroke-width="1"/>
<line x1="737.5" y1="47.8" x2="737.5" y2="51.8" stroke="#00ff00" stroke-width="1"/>
<rect x="736.5" y="48.8" width="2" height="3.0" fill="#000" stroke="#00ff00" stroke-width="1"/>
<line x1="741.5" y1="49.5" x2="741.5" y2="52.5" stroke="#00ff00" stroke-width="1"/>
<rect x="740.5" y="49.5" width="2" height="2.0" fill="#fff" stroke="#00ff00" stroke-width="1"/>
<line x1="745.5" y1="50.6" x2="745.5" y2="52.6" stroke="#00ff00" stroke-width="1"/>
<line x1="744.0" y1="51.1" x2="747.0" y2="51.1" stroke="#00ff00" stroke-width="1"/>
<line x1="749.5" y1="47.4" x2="749.5" y2="54.4" stroke="#00ff00" stroke-width="1"/>
<rect x="748.5" y="48.4" width="2" height="4.0" fill="#000" stroke="#00ff00" stroke-width="1"/>
<line x1="753.5" y1="48.7" x2="753.5" y2="53.7" stroke="#00ff00" stroke-width="1"/>
<rect x="752.5" y="49.7" width="2" height="3.0" fill="#fff" stroke="#00ff00" stroke-width="1"/>
<line x1="757.5" y1="47.1" x2="757.5" y2="53.1" stroke="#00ff00" stroke-width="1"/>
<rect x="756.5" y="48.1" width="2" height="3.0" fill="#fff" stroke="#00ff00" stroke-width="1"/>
<line x1="761.5" y1="48.9" x2="761.5" y2="54.9" stroke="#00ff00" stroke-width="1"/>
<rect x="760.5" y="48.9" width="2" height="4.0" fill="#000" stroke="#00ff00" stroke-width="1"/>
<line x1="765.5" y1="48.6" x2="765.5" y2="53.6" stroke="#00ff00" stroke-width="1"/>
<rect x="764.5" y="48.6" width="2" height="4.0" fill="#fff" stroke="#00ff00" stroke-width="1"/>
<line x1="769.5" y1="49.3" x2="769.5" y2="53.3" stroke="#00ff00" stroke-width="1"/>
<rect x="768.5" y="49.3" width="2" height="2.0" fill="#000" stroke="#00ff00" stroke-width="1"/>
<line x1="773.5" y1="48.3" x2="773.5" y2="51.3" stroke="#00ff00" stroke-width="1"/>
<line x1="772.0" y1="49.8" x2="775.0" y2="49.8" stroke="#00ff00" stroke-width="1"/>
<line x1="777.5" y1="48.6" x2="777.5" y2="52.6" stroke="#00ff00" stroke-width="1"/>
<line x1="776.0" y1="51.1" x2="779.0" y2="51.1" stroke="#00ff00" stroke-width="1"/>
<line x1="781.5" y1="48.6" x2="781.5" y2="52.6" stroke="#00ff00" stroke-width="1"/>
<rect x="780.5" y="48.6" width="2" height="3.0" fill="#000" stroke="#00ff00" stroke-width="1"/>
<line x1="785.5" y1="46.8" x2="785.5" y2="53.8" stroke="#00ff00" stroke-width="1"/>
<rect x="784.5" y="48.8" width="2" height="4.0" fill="#fff" stroke="#00ff00" stroke-width="1"/>
<line x1="789.5" y1="47.5" x2="789.5" y2="53.5" stroke="#00ff00" stroke-width="1"/>
<rect x="788.5" y="48.5" width="2" height="4.0" fill="#fff" stroke="#00ff00" stroke-width="1"/>
<line x1="793.5" y1="47.8" x2="793.5" y2="52.8" stroke="#00ff00" stroke-width="1"/>
<rect x="792.5" y="48.8" width="2" height="3.0" fill="#fff" stroke="#00ff00" stroke-width="1"/>
<line x1="797.5" y1="47.5" x2="797.5" y2="53.5" stroke="#00ff00" stroke-width="1"/>
<rect x="796.5" y="48.5" width="2" height="4.0" fill="#000" stroke="#00ff00" stroke-width="1"/>
<line x1="801.5" y1="47.5" x2="801.5" y2="52.5" stroke="#00ff00" stroke-width="1"/>
<rect x="800.5" y="48.5" width="2" height="3.0" fill="#fff" stroke="#00ff00" stroke-width="1"/>
<line x1="805.5" y1="49.1" x2="805.5" y2="52.1" stroke="#00ff00" stroke-width="1"/>
<rect x="804.5" y="49.1" width="2" height="2.0" fill="#000" stroke="#00ff00" stroke-width="1"/>
<line x1="809.5" y1="45.9" x2="809.5" y2="49.9" stroke="#00ff00" stroke-width="1"/>
<rect x="808.5" y="46.9" width="2" height="2.0" fill="#000" stroke="#00ff00" stroke-width="1"/>
<line x1="813.5" y1="46.6" x2="813.5" y2="50.6" stroke="#00ff00" stroke-width="1"/>
<rect x="812.5" y="47.6" width="2" height="2.0" fill="#fff" stroke="#00ff00" stroke-width="1"/>
<line x1="817.5" y1="46.3" x2="817.5" y2="51.3" stroke="#00ff00" stroke-width="1"/>
<rect x="816.5" y="47.3" width="2" height="2.0" fill="#fff" stroke="#00ff00" stroke-width="1"/>
<line x1="821.5" y1="41.9" x2="821.5" y2="48.9" stroke="#00ff00" stroke-width="1"/>
<rect x="820.5" y="43.9" width="2" height="4.0" fill="#000" stroke="#00ff00" stroke-width="1"/>
<line x1="825.5" y1="45.6" x2="825.5" y2="48.6" stroke="#00ff00" stroke-width="1"/>
<rect x="824.5" y="45.6" width="2" height="2.0" fill="#fff" stroke="#00ff00" stroke-width="1"/>
<line x1="829.5" y1="44.9" x2="829.5" y2="48.9" stroke="#00ff00" stroke-width="1"/>
<line x1="828.0" y1="46.4" x2="831.0" y2="46.4" stroke="#00ff00" stroke-width="1"/>
<line x1="833.5" y1="42.5" x2="833.5" y2="48.5" stroke="#00ff00" stroke-width="1"/>
<rect x="832.5" y="44.5" width="2" height="3.0" fill="#000" stroke="#00ff00" stroke-width="1"/>
<line x1="837.5" y1="43.1" x2="837.5" y2="49.1" stroke="#00ff00" stroke-width="1"/>
<rect x="836.5" y="44.1" width="2" height="4.0" fill="#000" stroke="#00ff00" stroke-width="1"/>
<line x1="841.5" y1="43.6" x2="841.5" y2="46.6" stroke="#00ff00" stroke-width="1"/>
<rect x="840.5" y="44.6" width="2" height="2.0" fill="#000" stroke="#00ff00" stroke-width="1"/>
<line x1="845.5" y1="43.0" x2="845.5" y2="47.0" stroke="#00ff00" stroke-width="1"/>
<rect x="844.5" y="44.0" width="2" height="2.0" fill="#000" stroke="#00ff00" stroke-width="1"/>
<line x1="849.5" y1="43.1" x2="849.5" y2="47.1" stroke="#00ff00" stroke-width="1"/>
<line x1="848.0" y1="45.6" x2="851.0" y2="45.6" stroke="#00ff00" stroke-width="1"/>
<line x1="853.5" y1="43.0" x2="853.5" y2="48.0" stroke="#00ff00" stroke-width="1"/>
<line x1="852.0" y1="45.5" x2="855.0" y2="45.5" stroke="#00ff00" stroke-width="1"/>
<line x1="857.5" y1="43.2" x2="857.5" y2="47.2" stroke="#00ff00" stroke-width="1"/>
<rect x="856.5" y="44.2" width="2" height="2.0" fill="#000" stroke="#00ff00" stroke-width="1"/>
<line x1="861.5" y1="45.6" x2="861.5" y2="47.6" stroke="#00ff00" stroke-width="1"/>
<line x1="860.0" y1="47.1" x2="863.0" y2="47.1" stroke="#00ff00" stroke-width="1"/>
<line x1="865.5" y1="43.8" x2="865.5" y2="46.8" stroke="#00ff00" stroke-width="1"/>
<line x1="864.0" y1="46.3" x2="867.0" y2="46.3" stroke="#00ff00" stroke-width="1"/>
<line x1="869.5" y1="44.8" x2="869.5" y2="50.8" stroke="#00ff00" stroke-width="1"/>
<rect x="868.5" y="45.8" width="2" height="3.0" fill="#000" stroke="#00ff00" stroke-width="1"/>
<line x1="873.5" y1="44.4" x2="873.5" y2="50.4" stroke="#00ff00" stroke-width="1"/>
<rect x="872.5" y="45.4" width="2" height="3.0" fill="#000" stroke="#00ff00" stroke-width="1"/>
<line x1="877.5" y1="45.6" x2="877.5" y2="49.6" stroke="#00ff00" stroke-width="1"/>
<rect x="876.5" y="46.6" width="2" height="3.0" fill="#fff" stroke="#00ff00" stroke-width="1"/>
<line x1="881.5" y1="46.8" x2="881.5" y2="47.8" stroke="#00ff00" stroke-width="1"/>
<line x1="880.0" y1="47.3" x2="883.0" y2="47.3" stroke="#00ff00" stroke-width="1"/>
<line x1="885.5" y1="45.2" x2="885.5" y2="50.2" stroke="#00ff00" stroke-width="1"/>
<rect x="884.5" y="46.2" width="2" height="3.0" fill="#fff" stroke="#00ff00" stroke-width="1"/>
<line x1="889.5" y1="45.8" x2="889.5" y2="50.8" stroke="#00ff00" stroke-width="1"/>
<rect x="888.5" y="46.8" width="2" height="2.0" fill="#fff" stroke="#00ff00" stroke-width="1"/>
<line x1="893.5" y1="45.8" x2="893.5" y2="50.8" stroke="#00ff00" stroke-width="1"/>
<rect x="892.5" y="45.8" width="2" height="4.0" fill="#fff" stroke="#00ff00" stroke-width="1"/>
<line x1="897.5" y1="47.4" x2="897.5" y2="50.4" stroke="#00ff00" stroke-width="1"/>
<line x1="896.0" y1="48.9" x2="899.0" y2="48.9" stroke="#00ff00" stroke-width="1"/>
<line x1="901.5" y1="45.7" x2="901.5" y2="53.7" stroke="#00ff00" stroke-width="1"/>
<rect x="900.5" y="47.7" width="2" height="4.0" fill="#000" stroke="#00ff00" stroke-width="1"/>
<line x1="905.5" y1="47.4" x2="905.5" y2="53.4" stroke="#00ff00" stroke-width="1"/>
<rect x="904.5" y="48.4" width="2" height="3.0" fill="#fff" stroke="#00ff00" stroke-width="1"/>
<line x1="909.5" y1="47.3" x2="909.5" y2="52.3" stroke="#00ff00" stroke-width="1"/>
<rect x="908.5" y="49.3" width="2" height="2.0" fill="#000" stroke="#00ff00" stroke-width="1"/>
<line x1="913.5" y1="49.1" x2="913.5" y2="52.1" stroke="#00ff00" stroke-width="1"/>
<rect x="912.5" y="49.1" width="2" height="2.0" fill="#fff" stroke="#00ff00" stroke-width="1"/>
<line x1="917.5" y1="47.2" x2="917.5" y2="53.2" stroke="#00ff00" stroke-width="1"/>
<rect x="916.5" y="49.2" width="2" height="2.0" fill="#fff" stroke="#00ff00" stroke-width="1"/>
<line x1="921.5" y1="47.9" x2="921.5" y2="52.9" stroke="#00ff00" stroke-width="1"/>
<rect x="920.5" y="48.9" width="2" height="3.0" fill="#000" stroke="#00ff00" stroke-width="1"/>
<line x1="925.5" y1="50.4" x2="925.5" y2="52.4" stroke="#00ff00" stroke-width="1"/>
<line x1="924.0" y1="50.9" x2="927.0" y2="50.9" stroke="#00ff00" stroke-width="1"/>
<line x1="929.5" y1="46.7" x2="929.5" y2="51.7" stroke="#00ff00" stroke-width="1"/>
<rect x="928.5" y="47.7" width="2" height="4.0" fill="#000" stroke="#00ff00" stroke-width="1"/>
<line x1="933.5" y1="48.3" x2="933.5" y2="51.3" stroke="#00ff00" stroke-width="1"/>
<line x1="932.0" y1="49.8" x2="935.0" y2="49.8" stroke="#00ff00" stroke-width="1"/>
<line x1="937.5" y1="46.9" x2="937.5" y2="52.9" stroke="#00ff00" stroke-width="1"/>
<rect x="936.5" y="47.9" width="2" height="4.0" fill="#000" stroke="#00ff00" stroke-width="1"/>
<line x1="941.5" y1="46.7" x2="941.5" y2="50.7" stroke="#00ff00" stroke-width="1"/>
<line x1="940.0" y1="48.2" x2="943.0" y2="48.2" stroke="#00ff00" stroke-width="1"/>
<line x1="945.5" y1="45.6" x2="945.5" y2="49.6" stroke="#00ff00" stroke-width="1"/>
<rect x="944.5" y="45.6" width="2" height="3.0" fill="#fff" stroke="#00ff00" stroke-width="1"/>
<line x1="949.5" y1="47.0" x2="949.5" y2="52.0" stroke="#00ff00" stroke-width="1"/>
<rect x="948.5" y="47.0" width="2" height="3.0" fill="#000" stroke="#00ff00" stroke-width="1"/>
<line x1="953.5" y1="46.3" x2="953.5" y2="50.3" stroke="#00ff00" stroke-width="1"/>
<line x1="952.0" y1="47.8" x2="955.0" y2="47.8" stroke="#00ff00" stroke-width="1"/>
<line x1="957.5" y1="47.3" x2="957.5" y2="51.3" stroke="#00ff00" stroke-width="1"/>
<rect x="956.5" y="47.3" width="2" height="2.0" fill="#fff" stroke="#00ff00" stroke-width="1"/>
<line x1="961.5" y1="46.2" x2="961.5" y2="51.2" stroke="#00ff00" stroke-width="1"/>
<rect x="960.5" y="47.2" width="2" height="2.0" fill="#fff" stroke="#00ff00" stroke-width="1"/>
<line x1="965.5" y1="47.4" x2="965.5" y2="51.4" stroke="#00ff00" stroke-width="1"/>
<rect x="964.5" y="47.4" width="2" height="3.0" fill="#000" stroke="#00ff00" stroke-width="1"/>
<line x1="969.5" y1="45.0" x2="969.5" y2="51.0" stroke="#00ff00" stroke-width="1"/>
<rect x="968.5" y="47.0" width="2" height="3.0" fill="#000" stroke="#00ff00" stroke-width="1"/>
<line x1="973.5" y1="47.2" x2="973.5" y2="50.2" stroke="#00ff00" stroke-width="1"/>
<rect x="972.5" y="47.2" width="2" height="2.0" fill="#000" stroke="#00ff00" stroke-width="1"/>
<line x1="977.5" y1="48.1" x2="977.5" y2="49.1" stroke="#00ff00" stroke-width="1"/>
<line x1="976.0" y1="48.6" x2="979.0" y2="48.6" stroke="#00ff00" stroke-width="1"/>
<line x1="981.5" y1="48.0" x2="981.5" y2="52.0" stroke="#00ff00" stroke-width="1"/>
<rect x="980.5" y="48.0" width="2" height="2.0" fill="#fff" stroke="#00ff00" stroke-width="1"/>
<line x1="985.5" y1="47.3" x2="985.5" y2="51.3" stroke="#00ff00" stroke-width="1"/>
<line x1="984.0" y1="48.8" x2="987.0" y2="48.8" stroke="#00ff00" stroke-width="1"/>
<line x1="989.5" y1="47.0" x2="989.5" y2="63.0" stroke="#00ff00" stroke-width="1"/>
<rect x="988.5" y="47.5" width="2" height="15.5" fill="#fff" stroke="#00ff00" stroke-width="1"/>
<line x1="993.5" y1="62.3" x2="993.5" y2="68.3" stroke="#00ff00" stroke-width="1"/>
<rect x="992.5" y="63.3" width="2" height="4.0" fill="#fff" stroke="#00ff00" stroke-width="1"/>
<line x1="997.5" y1="64.1" x2="997.5" y2="68.1" stroke="#00ff00" stroke-width="1"/>
<rect x="996.5" y="64.1" width="2" height="3.0" fill="#fff" stroke="#00ff00" stroke-width="1"/>
<line x1="1001.5" y1="66.2" x2="1001.5" y2="70.2" stroke="#00ff00" stroke-width="1"/>
<rect x="1000.5" y="67.2" width="2" height="2.0" fill="#000" stroke="#00ff00" stroke-width="1"/>
<line x1="1005.5" y1="63.0" x2="1005.5" y2="74.0" stroke="#00ff00" stroke-width="1"/>
<rect x="1004.5" y="64.0" width="2" height="9.5" fill="#fff" stroke="#00ff00" stroke-width="1"/>
<line x1="1009.5" y1="73.0" x2="1009.5" y2="85.0" stroke="#00ff00" stroke-width="1"/>
<rect x="1008.5" y="76.0" width="2" height="2.0" fill="#000" stroke="#00ff00" stroke-width="1"/>
<line x1="1013.5" y1="71.6" x2="1013.5" y2="76.6" stroke="#00ff00" stroke-width="1"/>
<rect x="1012.5" y="73.6" width="2" height="3.0" fill="#fff" stroke="#00ff00" stroke-width="1"/>
<line x1="1017.5" y1="75.7" x2="1017.5" y2="79.7" stroke="#00ff00" stroke-width="1"/>
<line x1="1016.0" y1="77.2" x2="1019.0" y2="77.2" stroke="#00ff00" stroke-width="1"/>
<line x1="1021.5" y1="76.6" x2="1021.5" y2="83.6" stroke="#00ff00" stroke-width="1"/>
<rect x="1020.5" y="78.6" width="2" height="4.0" fill="#000" stroke="#00ff00" stroke-width="1"/>
<line x1="1025.5" y1="81.9" x2="1025.5" y2="85.9" stroke="#00ff00" stroke-width="1"/>
<rect x="1024.5" y="81.9" width="2" height="3.0" fill="#fff" stroke="#00ff00" stroke-width="1"/>
<line x1="1029.5" y1="80.3" x2="1029.5" y2="84.3" stroke="#00ff00" stroke-width="1"/>
<rect x="1028.5" y="81.3" width="2" height="3.0" fill="#000" stroke="#00ff00" stroke-width="1"/>
<line x1="1033.5" y1="81.7" x2="1033.5" y2="83.7" stroke="#00ff00" stroke-width="1"/>
<rect x="1032.5" y="81.7" width="2" height="2.0" fill="#fff" stroke="#00ff00" stroke-width="1"/>
<line x1="1037.5" y1="77.1" x2="1037.5" y2="83.1" stroke="#00ff00" stroke-width="1"/>
<rect x="1036.5" y="78.1" width="2" height="4.0" fill="#000" stroke="#00ff00" stroke-width="1"/>
<line x1="1041.5" y1="77.7" x2="1041.5" y2="79.7" stroke="#00ff00" stroke-width="1"/>
<line x1="1040.0" y1="79.2" x2="1043.0" y2="79.2" stroke="#00ff00" stroke-width="1"/>
<line x1="1045.5" y1="78.2" x2="1045.5" y2="81.2" stroke="#00ff00" stroke-width="1"/>
<line x1="1044.0" y1="80.7" x2="1047.0" y2="80.7" stroke="#00ff00" stroke-width="1"/>
<line x1="1049.5" y1="78.7" x2="1049.5" y2="84.7" stroke="#00ff00" stroke-width="1"/>
<rect x="1048.5" y="80.7" width="2" height="2.0" fill="#fff" stroke="#00ff00" stroke-width="1"/>
<line x1="1053.5" y1="79.2" x2="1053.5" y2="85.2" stroke="#00ff00" stroke-width="1"/>
<rect x="1052.5" y="80.2" width="2" height="3.0" fill="#000" stroke="#00ff00" stroke-width="1"/>
<line x1="1057.5" y1="78.7" x2="1057.5" y2="82.7" stroke="#00ff00" stroke-width="1"/>
<line x1="1056.0" y1="81.2" x2="1059.0" y2="81.2" stroke="#00ff00" stroke-width="1"/>
<line x1="1061.5" y1="77.8" x2="1061.5" y2="79.8" stroke="#00ff00" stroke-width="1"/>
<rect x="1060.5" y="77.8" width="2" height="2.0" fill="#000" stroke="#00ff00" stroke-width="1"/>
<line x1="1065.5" y1="73.2" x2="1065.5" y2="78.2" stroke="#00ff00" stroke-width="1"/>
<rect x="1064.5" y="73.2" width="2" height="4.0" fill="#000" stroke="#00ff00" stroke-width="1"/>
<line x1="1069.5" y1="73.5" x2="1069.5" y2="76.5" stroke="#00ff00" stroke-width="1"/>
<line x1="1068.0" y1="75.0" x2="1071.0" y2="75.0" stroke="#00ff00" stroke-width="1"/>
<line x1="1073.5" y1="74.6" x2="1073.5" y2="77.6" stroke="#00ff00" stroke-width="1"/>
<line x1="1072.0" y1="76.1" x2="1075.0" y2="76.1" stroke="#00ff00" stroke-width="1"/>
<line x1="1077.5" y1="71.2" x2="1077.5" y2="78.2" stroke="#00ff00" stroke-width="1"/>
<rect x="1076.5" y="73.2" width="2" height="3.0" fill="#000" stroke="#00ff00" stroke-width="1"/>
<line x1="1081.5" y1="76.2" x2="1081.5" y2="77.2" stroke="#00ff00" stroke-width="1"/>
<line x1="1080.0" y1="76.7" x2="1083.0" y2="76.7" stroke="#00ff00" stroke-width="1"/>
<line x1="1085.5" y1="75.6" x2="1085.5" y2="80.6" stroke="#00ff00" stroke-width="1"/>
<rect x="1084.5" y="75.6" width="2" height="3.0" fill="#fff" stroke="#00ff00" stroke-width="1"/>
<line x1="1089.5" y1="74.7" x2="1089.5" y2="77.7" stroke="#00ff00" stroke-width="1"/>
<line x1="1088.0" y1="77.2" x2="1091.0" y2="77.2" stroke="#00ff00" stroke-width="1"/>
<line x1="1093.5" y1="75.6" x2="1093.5" y2="82.6" stroke="#00ff00" stroke-width="1"/>
<rect x="1092.5" y="77.6" width="2" height="3.0" fill="#000" stroke="#00ff00" stroke-width="1"/>
<line x1="1097.5" y1="76.9" x2="1097.5" y2="81.9" stroke="#00ff00" stroke-width="1"/>
<rect x="1096.5" y="76.9" width="2" height="4.0" fill="#000" stroke="#00ff00" stroke-width="1"/>
<line x1="1101.5" y1="75.1" x2="1101.5" y2="83.1" stroke="#00ff00" stroke-width="1"/>
<rect x="1100.5" y="77.1" width="2" height="4.0" fill="#fff" stroke="#00ff00" stroke-width="1"/>
<line x1="1105.5" y1="78.6" x2="1105.5" y2="82.6" stroke="#00ff00" stroke-width="1"/>
<rect x="1104.5" y="79.6" width="2" height="2.0" fill="#fff" stroke="#00ff00" stroke-width="1"/>
<line x1="1109.5" y1="80.2" x2="1109.5" y2="84.2" stroke="#00ff00" stroke-width="1"/>
<rect x="1108.5" y="81.2" width="2" height="3.0" fill="#000" stroke="#00ff00" stroke-width="1"/>
<line x1="1113.5" y1="79.7" x2="1113.5" y2="84.7" stroke="#00ff00" stroke-width="1"/>
<rect x="1112.5" y="81.7" width="2" height="2.0" fill="#fff" stroke="#00ff00" stroke-width="1"/>
<line x1="1117.5" y1="80.4" x2="1117.5" y2="86.4" stroke="#00ff00" stroke-width="1"/>
<rect x="1116.5" y="81.4" width="2" height="3.0" fill="#fff" stroke="#00ff00" stroke-width="1"/>
<line x1="1121.5" y1="79.5" x2="1121.5" y2="84.5" stroke="#00ff00" stroke-width="1"/>
<rect x="1120.5" y="80.5" width="2" height="2.0" fill="#fff" stroke="#00ff00" stroke-width="1"/>
<line x1="1125.5" y1="83.0" x2="1125.5" y2="88.0" stroke="#00ff00" stroke-width="1"/>
<rect x="1124.5" y="83.0" width="2" height="4.0" fill="#000" stroke="#00ff00" stroke-width="1"/>
<line x1="555" y1="47.5" x2="565" y2="47.5" stroke="#00ff00" stroke-width="1"/>
<path d="M943 47.5 L949 42.5 L949 52.5 Z" fill="#d08a10" stroke="#f0e0c0" stroke-width=".8" shape-rendering="auto"/>
<path d="M1125 0 L1137 0 L1131 5.5 Z" fill="#8696b0" shape-rendering="auto"/>
<line x1="3.5" y1="0" x2="3.5" y2="94" stroke="#fff"/>
<line x1="3" y1="90.5" x2="1417" y2="90.5" stroke="#fff"/>
<line x1="1416.5" y1="0" x2="1416.5" y2="91" stroke="#fff"/>
<text x="2.0" y="103" fill="#fff" font-size="10" textLength="50" lengthAdjust="spacingAndGlyphs">9 May 2025</text>
<line x1="67.5" y1="90" x2="67.5" y2="94" stroke="#fff"/>
<text x="66.0" y="103" fill="#fff" font-size="10" textLength="52" lengthAdjust="spacingAndGlyphs">9 May 13:50</text>
<line x1="131.5" y1="90" x2="131.5" y2="94" stroke="#fff"/>
<text x="130.0" y="103" fill="#fff" font-size="10" textLength="52" lengthAdjust="spacingAndGlyphs">9 May 15:10</text>
<line x1="195.5" y1="90" x2="195.5" y2="94" stroke="#fff"/>
<text x="194.0" y="103" fill="#fff" font-size="10" textLength="52" lengthAdjust="spacingAndGlyphs">9 May 16:30</text>
<line x1="259.5" y1="90" x2="259.5" y2="94" stroke="#fff"/>
<text x="258.0" y="103" fill="#fff" font-size="10" textLength="52" lengthAdjust="spacingAndGlyphs">9 May 17:50</text>
<line x1="323.5" y1="90" x2="323.5" y2="94" stroke="#fff"/>
<text x="322.0" y="103" fill="#fff" font-size="10" textLength="52" lengthAdjust="spacingAndGlyphs">9 May 19:10</text>
<line x1="387.5" y1="90" x2="387.5" y2="94" stroke="#fff"/>
<text x="386.0" y="103" fill="#fff" font-size="10" textLength="52" lengthAdjust="spacingAndGlyphs">9 May 20:30</text>
<line x1="451.5" y1="90" x2="451.5" y2="94" stroke="#fff"/>
<text x="450.0" y="103" fill="#fff" font-size="10" textLength="52" lengthAdjust="spacingAndGlyphs">9 May 21:50</text>
<line x1="515.5" y1="90" x2="515.5" y2="94" stroke="#fff"/>
<text x="514.0" y="103" fill="#fff" font-size="10" textLength="52" lengthAdjust="spacingAndGlyphs">9 May 23:10</text>
<line x1="579.5" y1="90" x2="579.5" y2="94" stroke="#fff"/>
<text x="578.0" y="103" fill="#fff" font-size="10" textLength="57.5" lengthAdjust="spacingAndGlyphs">12 May 01:30</text>
<line x1="643.5" y1="90" x2="643.5" y2="94" stroke="#fff"/>
<text x="642.0" y="103" fill="#fff" font-size="10" textLength="57.5" lengthAdjust="spacingAndGlyphs">12 May 02:50</text>
<line x1="707.5" y1="90" x2="707.5" y2="94" stroke="#fff"/>
<text x="706.0" y="103" fill="#fff" font-size="10" textLength="57.5" lengthAdjust="spacingAndGlyphs">12 May 04:10</text>
<line x1="771.5" y1="90" x2="771.5" y2="94" stroke="#fff"/>
<text x="770.0" y="103" fill="#fff" font-size="10" textLength="57.5" lengthAdjust="spacingAndGlyphs">12 May 05:30</text>
<line x1="835.5" y1="90" x2="835.5" y2="94" stroke="#fff"/>
<text x="834.0" y="103" fill="#fff" font-size="10" textLength="57.5" lengthAdjust="spacingAndGlyphs">12 May 06:50</text>
<line x1="899.5" y1="90" x2="899.5" y2="94" stroke="#fff"/>
<text x="898.0" y="103" fill="#fff" font-size="10" textLength="57.5" lengthAdjust="spacingAndGlyphs">12 May 08:10</text>
<line x1="963.5" y1="90" x2="963.5" y2="94" stroke="#fff"/>
<text x="962.0" y="103" fill="#fff" font-size="10" textLength="57.5" lengthAdjust="spacingAndGlyphs">12 May 09:30</text>
<line x1="1027.5" y1="90" x2="1027.5" y2="94" stroke="#fff"/>
<text x="1026.0" y="103" fill="#fff" font-size="10" textLength="57.5" lengthAdjust="spacingAndGlyphs">12 May 10:50</text>
<line x1="1091.5" y1="90" x2="1091.5" y2="94" stroke="#fff"/>
<text x="1090.0" y="103" fill="#fff" font-size="10" textLength="57.5" lengthAdjust="spacingAndGlyphs">12 May 12:10</text>
<path d="M6 5.5h7.4l-3.7 4.3z" fill="#fff" shape-rendering="auto"/>
<text x="18" y="10.7" fill="#fff" font-size="10" textLength="202" lengthAdjust="spacingAndGlyphs">XAUUSD,M5&#160;&#160;3217.23 3217.48 3213.09 3214.67</text>
<line x1="1417" y1="21.5" x2="1420" y2="21.5" stroke="#fff"/>
<text x="1422" y="25.5" fill="#fff" font-size="10" textLength="33" lengthAdjust="spacingAndGlyphs">3321.35</text>
<line x1="1417" y1="54.5" x2="1420" y2="54.5" stroke="#fff"/>
<text x="1422" y="58.5" fill="#fff" font-size="10" textLength="33" lengthAdjust="spacingAndGlyphs">3267.00</text>
<rect x="1418" y="82" width="30" height="10" fill="#fff"/>
<text x="1422" y="90.5" fill="#000" font-size="10" textLength="33" lengthAdjust="spacingAndGlyphs">3214.67</text>
<text x="1323" y="13" fill="#fff" font-size="11" textLength="76" lengthAdjust="spacingAndGlyphs">黑石矩阵全能版3.9</text>
<g shape-rendering="auto"><circle cx="1405.6" cy="9.6" r="5" fill="none" stroke="#fff" stroke-width="1"/><circle cx="1403.8" cy="8" r=".8" fill="#fff"/><circle cx="1407.3999999999999" cy="8" r=".8" fill="#fff"/><path d="M1403.0 10.8 Q1405.6 13.6 1408.1999999999998 10.8" fill="none" stroke="#fff" stroke-width="1"/></g>
</svg>
  <div id="pnl"><div class="t1">黑石矩阵交易面板</div><div class="ln"></div><div class="t2">交易参数</div><div class="t2" style="top:63px;left:16px;font-size:12px;color:#e8e8e8">止损 止盈</div><div class="wb"></div></div>
</div>
<!-- chart tabs -->
<div class="abs" style="left:453px;top:111px;width:1447px;height:2px;background:#fff"></div>
<div class="abs" style="left:453px;top:113px;width:1447px;height:1px;background:#000"></div>
<div class="tabs" style="left:453px;top:114px;width:1447px;height:19px;line-height:18px">
  <div class="t" style="left:16px"><span class="sx" style="font-size:12.5px;transform:scaleX(.945)">EURUSD,H4</span></div><div class="sp" style="left:96px;top:3px;height:14px"></div>
  <div class="t" style="left:108px;font-size:12.5px">XAUUSD,M5</div>
  <div class="a" style="left:192px;top:-1px;width:96px;height:20px;font-size:12.5px;line-height:19px">XAUUSD,M5</div>
  <div class="t" style="left:300px;font-size:12.5px">XAUUSD,M5</div><div class="sp" style="left:384px;top:3px;height:14px"></div>
  <div class="t" style="left:396px;font-size:12.5px">XAUUSD,M1</div><div class="sp" style="left:480px;top:3px;height:14px"></div>
  <svg class="abs" style="left:1432px;top:5px" width="4" height="7" viewBox="0 0 4 7"><path d="M4 0v7L0 3.5z" fill="#8a8a8a"/></svg>
</div>
<div class="abs" style="left:1900px;top:0;width:1px;height:908px;background:#fff"></div>
<div class="abs" style="left:1901px;top:0;width:8px;height:851px;background:#c9c9c9"></div>
<div class="abs" style="left:0;top:907px;width:1909px;height:1px;background:#3c3c3c;z-index:5"></div>

<!-- splitter lines -->
<div class="abs" style="left:0;top:133px;width:1900px;height:1px;background:#fff"></div>
<div class="abs" style="left:0;top:136px;width:1900px;height:1px;background:#f6f6f6"></div>

<!-- left strip -->
<div class="abs" style="left:0;top:151px;width:11px;height:735px;background:linear-gradient(#b6cee9,#a3bad9)"></div>
<div class="abs" style="left:11px;top:137px;width:1px;height:750px;background:#fff"></div>
<div class="xbtn" style="left:1px;top:137px">×</div>
<div class="abs" style="left:12px;top:137px;width:1885px;height:1px;background:#a0a0a0"></div>
<div class="abs" style="left:12px;top:137px;width:1px;height:750px;background:#828282"></div>

<!-- table -->
<div id="tb">
<div class="hd"><div class="hc l" style="left:0px;width:139px"><span>订单</span></div><div class="hc" style="left:138px;width:236px"><span>时间</span></div><div class="hc" style="left:373px;width:107px"><span>类型</span></div><div class="hc" style="left:479px;width:86px"><span>手数</span></div><div class="hc" style="left:564px;width:107px"><span>交易品种</span></div><div class="hc" style="left:670px;width:107px"><span>价格</span></div><div class="hc" style="left:776px;width:107px"><span>止损</span></div><div class="hc" style="left:882px;width:107px"><span>止盈</span></div><div class="hc" style="left:988px;width:236px;padding-right:25px"><span>时间</span><svg class="srt" viewBox="0 0 8 8"><path d="M0.5 0.5H7M0.7 0.7L3.9 6.8" fill="none" stroke="#505050" stroke-width="1"/></svg></div><div class="hc" style="left:1223px;width:107px"><span>价格</span></div><div class="hc" style="left:1329px;width:107px"><span>库存费</span></div><div class="hc" style="left:1435px;width:118px"><span>获利</span></div><div class="hc" style="left:1552px;width:332px"><span>注释</span></div></div>
<div class="r" style="top:25px"><div class="c o s" style="left:0px;width:138px"><svg class="ic" viewBox="0 0 16 16"><path d="M1.5 1.5H8L11.5 5V14H1.5Z" fill="url(#pg)" stroke="#585858"/><path d="M8 1.5V5H11.5" fill="#fff" stroke="#585858"/><circle cx="10.4" cy="12.3" r="3.3" fill="url(#rb)" stroke="#a82200" stroke-width=".7"/></svg><span>201904482</span></div><div class="c" style="left:138px;width:235px"><span>2025.05.12 10:05:02</span></div><div class="c" style="left:373px;width:106px"><span>sell</span></div><div class="c" style="left:479px;width:85px"><span>0.05</span></div><div class="c" style="left:564px;width:106px"><span>xauusd</span></div><div class="c" style="left:670px;width:106px"><span>3251.75</span></div><div class="c" style="left:776px;width:106px"><span>3264.46</span></div><div class="c gn" style="left:882px;width:106px"><span>3214.46</span></div><div class="c" style="left:988px;width:235px"><span>2025.05.12 12:55:21</span></div><div class="c" style="left:1223px;width:106px"><span>3214.46</span></div><div class="c" style="left:1329px;width:106px"><span>0.00</span></div><div class="c" style="left:1435px;width:117px"><span>186.45</span></div><div class="c cm" style="left:1552px;width:331px"><span style="transform:scaleX(0.916)">HP_EA_SPLIT6[tp]</span></div></div>
<div class="r g" style="top:46px"><div class="c o b" style="left:0px;width:138px"><svg class="ic" viewBox="0 0 16 16"><path d="M1.5 1.5H8L11.5 5V14H1.5Z" fill="url(#pg)" stroke="#585858"/><path d="M8 1.5V5H11.5" fill="#fff" stroke="#585858"/><circle cx="10.4" cy="12.3" r="3.3" fill="url(#bb)" stroke="#0b4f98" stroke-width=".7"/></svg><span>201952356</span></div><div class="c" style="left:138px;width:235px"><span>2025.05.12 11:35:07</span></div><div class="c" style="left:373px;width:106px"><span>buy</span></div><div class="c" style="left:479px;width:85px"><span>0.25</span></div><div class="c" style="left:564px;width:106px"><span>xauusd</span></div><div class="c" style="left:670px;width:106px"><span>3227.38</span></div><div class="c pk" style="left:776px;width:106px"><span>3224.03</span></div><div class="c" style="left:882px;width:106px"><span>0.00</span></div><div class="c" style="left:988px;width:235px"><span>2025.05.12 12:30:48</span></div><div class="c" style="left:1223px;width:106px"><span>3224.03</span></div><div class="c" style="left:1329px;width:106px"><span>0.00</span></div><div class="c" style="left:1435px;width:117px"><span>-83.75</span></div><div class="c cm" style="left:1552px;width:331px"><span style="transform:scaleX(1.044)">from #201951484[sl]</span></div></div>
<div class="r sel" style="top:67px"><div class="c o s" style="left:0px;width:138px"><svg class="ic" viewBox="0 0 16 16"><path d="M1.5 1.5H8L11.5 5V14H1.5Z" fill="url(#pg)" stroke="#585858"/><path d="M8 1.5V5H11.5" fill="#fff" stroke="#585858"/><circle cx="10.4" cy="12.3" r="3.3" fill="url(#rb)" stroke="#a82200" stroke-width=".7"/></svg><span>201959668</span></div><div class="c" style="left:138px;width:235px"><span>2025.05.12 12:05:02</span></div><div class="c" style="left:373px;width:106px"><span>sell</span></div><div class="c" style="left:479px;width:85px"><span>0.25</span></div><div class="c" style="left:564px;width:106px"><span>xauusd</span></div><div class="c" style="left:670px;width:106px"><span>3228.30</span></div><div class="c" style="left:776px;width:106px"><span>3231.75</span></div><div class="c" style="left:882px;width:106px"><span>0.00</span></div><div class="c" style="left:988px;width:235px"><span>2025.05.12 12:15:30</span></div><div class="c" style="left:1223px;width:106px"><span>3224.83</span></div><div class="c" style="left:1329px;width:106px"><span>0.00</span></div><div class="c" style="left:1435px;width:117px"><span>86.75</span></div><div class="c cm" style="left:1552px;width:331px"><span style="transform:scaleX(1.04)">to #201962029</span></div></div>
<div class="r g" style="top:88px"><div class="c o b" style="left:0px;width:138px"><svg class="ic" viewBox="0 0 16 16"><path d="M1.5 1.5H8L11.5 5V14H1.5Z" fill="url(#pg)" stroke="#585858"/><path d="M8 1.5V5H11.5" fill="#fff" stroke="#585858"/><circle cx="10.4" cy="12.3" r="3.3" fill="url(#bb)" stroke="#0b4f98" stroke-width=".7"/></svg><span>201951484</span></div><div class="c" style="left:138px;width:235px"><span>2025.05.12 11:35:07</span></div><div class="c" style="left:373px;width:106px"><span>buy</span></div><div class="c" style="left:479px;width:85px"><span>0.25</span></div><div class="c" style="left:564px;width:106px"><span>xauusd</span></div><div class="c" style="left:670px;width:106px"><span>3227.38</span></div><div class="c" style="left:776px;width:106px"><span>3224.03</span></div><div class="c" style="left:882px;width:106px"><span>0.00</span></div><div class="c" style="left:988px;width:235px"><span>2025.05.12 11:38:40</span></div><div class="c" style="left:1223px;width:106px"><span>3230.75</span></div><div class="c" style="left:1329px;width:106px"><span>0.00</span></div><div class="c" style="left:1435px;width:117px"><span>84.25</span></div><div class="c cm" style="left:1552px;width:331px"><span style="transform:scaleX(1.04)">to #201952356</span></div></div>
<div class="r" style="top:109px"><div class="c o s" style="left:0px;width:138px"><svg class="ic" viewBox="0 0 16 16"><path d="M1.5 1.5H8L11.5 5V14H1.5Z" fill="url(#pg)" stroke="#585858"/><path d="M8 1.5V5H11.5" fill="#fff" stroke="#585858"/><circle cx="10.4" cy="12.3" r="3.3" fill="url(#rb)" stroke="#a82200" stroke-width=".7"/></svg><span>201896628</span></div><div class="c" style="left:138px;width:235px"><span>2025.05.12 09:57:00</span></div><div class="c" style="left:373px;width:106px"><span>sell</span></div><div class="c" style="left:479px;width:85px"><span>0.25</span></div><div class="c" style="left:564px;width:106px"><span>xauusd</span></div><div class="c" style="left:670px;width:106px"><span>3278.54</span></div><div class="c" style="left:776px;width:106px"><span>3237.40</span></div><div class="c" style="left:882px;width:106px"><span>0.00</span></div><div class="c" style="left:988px;width:235px"><span>2025.05.12 11:03:39</span></div><div class="c" style="left:1223px;width:106px"><span>3228.81</span></div><div class="c" style="left:1329px;width:106px"><span>0.00</span></div><div class="c" style="left:1435px;width:117px"><span>1 243.25</span></div><div class="c cm" style="left:1552px;width:331px"><span style="transform:scaleX(1.045)">from #201895005</span></div></div>
<div class="r g" style="top:130px"><div class="c o s" style="left:0px;width:138px"><svg class="ic" viewBox="0 0 16 16"><path d="M1.5 1.5H8L11.5 5V14H1.5Z" fill="url(#pg)" stroke="#585858"/><path d="M8 1.5V5H11.5" fill="#fff" stroke="#585858"/><circle cx="10.4" cy="12.3" r="3.3" fill="url(#rb)" stroke="#a82200" stroke-width=".7"/></svg><span>201904355</span></div><div class="c" style="left:138px;width:235px"><span>2025.05.12 10:05:00</span></div><div class="c" style="left:373px;width:106px"><span>sell</span></div><div class="c" style="left:479px;width:85px"><span>0.22</span></div><div class="c" style="left:564px;width:106px"><span>xauusd</span></div><div class="c" style="left:670px;width:106px"><span>3254.51</span></div><div class="c pk" style="left:776px;width:106px"><span>3233.63</span></div><div class="c" style="left:882px;width:106px"><span>0.00</span></div><div class="c" style="left:988px;width:235px"><span>2025.05.12 10:30:14</span></div><div class="c" style="left:1223px;width:106px"><span>3233.63</span></div><div class="c" style="left:1329px;width:106px"><span>0.00</span></div><div class="c" style="left:1435px;width:117px"><span>459.36</span></div><div class="c cm" style="left:1552px;width:331px"><span style="transform:scaleX(0.881)">HP_EA_RESERVE[sl]</span></div></div>
<div class="r" style="top:151px"><div class="c o s" style="left:0px;width:138px"><svg class="ic" viewBox="0 0 16 16"><path d="M1.5 1.5H8L11.5 5V14H1.5Z" fill="url(#pg)" stroke="#585858"/><path d="M8 1.5V5H11.5" fill="#fff" stroke="#585858"/><circle cx="10.4" cy="12.3" r="3.3" fill="url(#rb)" stroke="#a82200" stroke-width=".7"/></svg><span>201904448</span></div><div class="c" style="left:138px;width:235px"><span>2025.05.12 10:05:01</span></div><div class="c" style="left:373px;width:106px"><span>sell</span></div><div class="c" style="left:479px;width:85px"><span>0.05</span></div><div class="c" style="left:564px;width:106px"><span>xauusd</span></div><div class="c" style="left:670px;width:106px"><span>3252.76</span></div><div class="c" style="left:776px;width:106px"><span>3264.46</span></div><div class="c gn" style="left:882px;width:106px"><span>3224.46</span></div><div class="c" style="left:988px;width:235px"><span>2025.05.12 10:27:42</span></div><div class="c" style="left:1223px;width:106px"><span>3224.46</span></div><div class="c" style="left:1329px;width:106px"><span>0.00</span></div><div class="c" style="left:1435px;width:117px"><span>141.50</span></div><div class="c cm" style="left:1552px;width:331px"><span style="transform:scaleX(0.916)">HP_EA_SPLIT5[tp]</span></div></div>
<div class="r g" style="top:172px"><div class="c o s" style="left:0px;width:138px"><svg class="ic" viewBox="0 0 16 16"><path d="M1.5 1.5H8L11.5 5V14H1.5Z" fill="url(#pg)" stroke="#585858"/><path d="M8 1.5V5H11.5" fill="#fff" stroke="#585858"/><circle cx="10.4" cy="12.3" r="3.3" fill="url(#rb)" stroke="#a82200" stroke-width=".7"/></svg><span>201904433</span></div><div class="c" style="left:138px;width:235px"><span>2025.05.12 10:05:01</span></div><div class="c" style="left:373px;width:106px"><span>sell</span></div><div class="c" style="left:479px;width:85px"><span>0.05</span></div><div class="c" style="left:564px;width:106px"><span>xauusd</span></div><div class="c" style="left:670px;width:106px"><span>3252.94</span></div><div class="c" style="left:776px;width:106px"><span>3264.46</span></div><div class="c gn" style="left:882px;width:106px"><span>3229.46</span></div><div class="c" style="left:988px;width:235px"><span>2025.05.12 10:26:54</span></div><div class="c" style="left:1223px;width:106px"><span>3229.46</span></div><div class="c" style="left:1329px;width:106px"><span>0.00</span></div><div class="c" style="left:1435px;width:117px"><span>117.40</span></div><div class="c cm" style="left:1552px;width:331px"><span style="transform:scaleX(0.916)">HP_EA_SPLIT4[tp]</span></div></div>
<div class="r" style="top:193px"><div class="c o s" style="left:0px;width:138px"><svg class="ic" viewBox="0 0 16 16"><path d="M1.5 1.5H8L11.5 5V14H1.5Z" fill="url(#pg)" stroke="#585858"/><path d="M8 1.5V5H11.5" fill="#fff" stroke="#585858"/><circle cx="10.4" cy="12.3" r="3.3" fill="url(#rb)" stroke="#a82200" stroke-width=".7"/></svg><span>201904424</span></div><div class="c" style="left:138px;width:235px"><span>2025.05.12 10:05:01</span></div><div class="c" style="left:373px;width:106px"><span>sell</span></div><div class="c" style="left:479px;width:85px"><span>0.05</span></div><div class="c" style="left:564px;width:106px"><span>xauusd</span></div><div class="c" style="left:670px;width:106px"><span>3253.14</span></div><div class="c" style="left:776px;width:106px"><span>3264.46</span></div><div class="c gn" style="left:882px;width:106px"><span>3234.46</span></div><div class="c" style="left:988px;width:235px"><span>2025.05.12 10:25:39</span></div><div class="c" style="left:1223px;width:106px"><span>3234.46</span></div><div class="c" style="left:1329px;width:106px"><span>0.00</span></div><div class="c" style="left:1435px;width:117px"><span>93.40</span></div><div class="c cm" style="left:1552px;width:331px"><span style="transform:scaleX(0.916)">HP_EA_SPLIT3[tp]</span></div></div>
<div class="r g" style="top:214px"><div class="c o s" style="left:0px;width:138px"><svg class="ic" viewBox="0 0 16 16"><path d="M1.5 1.5H8L11.5 5V14H1.5Z" fill="url(#pg)" stroke="#585858"/><path d="M8 1.5V5H11.5" fill="#fff" stroke="#585858"/><circle cx="10.4" cy="12.3" r="3.3" fill="url(#rb)" stroke="#a82200" stroke-width=".7"/></svg><span>201907943</span></div><div class="c" style="left:138px;width:235px"><span>2025.05.12 10:10:00</span></div><div class="c" style="left:373px;width:106px"><span>sell</span></div><div class="c" style="left:479px;width:85px"><span>0.25</span></div><div class="c" style="left:564px;width:106px"><span>xauusd</span></div><div class="c" style="left:670px;width:106px"><span>3246.54</span></div><div class="c" style="left:776px;width:106px"><span>3256.63</span></div><div class="c" style="left:882px;width:106px"><span>0.00</span></div><div class="c" style="left:988px;width:235px"><span>2025.05.12 10:24:08</span></div><div class="c" style="left:1223px;width:106px"><span>3235.66</span></div><div class="c" style="left:1329px;width:106px"><span>0.00</span></div><div class="c" style="left:1435px;width:117px"><span>272.00</span></div><div class="c cm" style="left:1552px;width:331px"><span style="transform:scaleX(1.04)">to #201916344</span></div></div>
<div class="r" style="top:235px"><div class="c o s" style="left:0px;width:138px"><svg class="ic" viewBox="0 0 16 16"><path d="M1.5 1.5H8L11.5 5V14H1.5Z" fill="url(#pg)" stroke="#585858"/><path d="M8 1.5V5H11.5" fill="#fff" stroke="#585858"/><circle cx="10.4" cy="12.3" r="3.3" fill="url(#rb)" stroke="#a82200" stroke-width=".7"/></svg><span>201904392</span></div><div class="c" style="left:138px;width:235px"><span>2025.05.12 10:05:01</span></div><div class="c" style="left:373px;width:106px"><span>sell</span></div><div class="c" style="left:479px;width:85px"><span>0.05</span></div><div class="c" style="left:564px;width:106px"><span>xauusd</span></div><div class="c" style="left:670px;width:106px"><span>3253.50</span></div><div class="c" style="left:776px;width:106px"><span>3264.46</span></div><div class="c gn" style="left:882px;width:106px"><span>3239.46</span></div><div class="c" style="left:988px;width:235px"><span>2025.05.12 10:23:27</span></div><div class="c" style="left:1223px;width:106px"><span>3239.46</span></div><div class="c" style="left:1329px;width:106px"><span>0.00</span></div><div class="c" style="left:1435px;width:117px"><span>70.20</span></div><div class="c cm" style="left:1552px;width:331px"><span style="transform:scaleX(0.916)">HP_EA_SPLIT2[tp]</span></div></div>
<div class="r g" style="top:256px"><div class="c o s" style="left:0px;width:138px"><svg class="ic" viewBox="0 0 16 16"><path d="M1.5 1.5H8L11.5 5V14H1.5Z" fill="url(#pg)" stroke="#585858"/><path d="M8 1.5V5H11.5" fill="#fff" stroke="#585858"/><circle cx="10.4" cy="12.3" r="3.3" fill="url(#rb)" stroke="#a82200" stroke-width=".7"/></svg><span>201904374</span></div><div class="c" style="left:138px;width:235px"><span>2025.05.12 10:05:00</span></div><div class="c" style="left:373px;width:106px"><span>sell</span></div><div class="c" style="left:479px;width:85px"><span>0.05</span></div><div class="c" style="left:564px;width:106px"><span>xauusd</span></div><div class="c" style="left:670px;width:106px"><span>3253.34</span></div><div class="c" style="left:776px;width:106px"><span>3264.46</span></div><div class="c gn" style="left:882px;width:106px"><span>3244.46</span></div><div class="c" style="left:988px;width:235px"><span>2025.05.12 10:22:06</span></div><div class="c" style="left:1223px;width:106px"><span>3244.46</span></div><div class="c" style="left:1329px;width:106px"><span>0.00</span></div><div class="c" style="left:1435px;width:117px"><span>44.40</span></div><div class="c cm" style="left:1552px;width:331px"><span style="transform:scaleX(0.916)">HP_EA_SPLIT1[tp]</span></div></div>
<div class="r" style="top:277px"><div class="c o b" style="left:0px;width:138px"><svg class="ic" viewBox="0 0 16 16"><path d="M1.5 1.5H8L11.5 5V14H1.5Z" fill="url(#pg)" stroke="#585858"/><path d="M8 1.5V5H11.5" fill="#fff" stroke="#585858"/><circle cx="10.4" cy="12.3" r="3.3" fill="url(#bb)" stroke="#0b4f98" stroke-width=".7"/></svg><span>201898730</span></div><div class="c" style="left:138px;width:235px"><span>2025.05.12 10:01:00</span></div><div class="c" style="left:373px;width:106px"><span>buy</span></div><div class="c" style="left:479px;width:85px"><span>0.50</span></div><div class="c" style="left:564px;width:106px"><span>xauusd</span></div><div class="c" style="left:670px;width:106px"><span>3258.55</span></div><div class="c pk" style="left:776px;width:106px"><span>3248.42</span></div><div class="c" style="left:882px;width:106px"><span>0.00</span></div><div class="c" style="left:988px;width:235px"><span>2025.05.12 10:07:15</span></div><div class="c" style="left:1223px;width:106px"><span>3248.42</span></div><div class="c" style="left:1329px;width:106px"><span>0.00</span></div><div class="c" style="left:1435px;width:117px"><span>-506.50</span></div><div class="c cm" style="left:1552px;width:331px"><span style="transform:scaleX(0.975)">HP1[sl]</span></div></div>
<div class="r g" style="top:298px"><div class="c o s" style="left:0px;width:138px"><svg class="ic" viewBox="0 0 16 16"><path d="M1.5 1.5H8L11.5 5V14H1.5Z" fill="url(#pg)" stroke="#585858"/><path d="M8 1.5V5H11.5" fill="#fff" stroke="#585858"/><circle cx="10.4" cy="12.3" r="3.3" fill="url(#rb)" stroke="#a82200" stroke-width=".7"/></svg><span>201895005</span></div><div class="c" style="left:138px;width:235px"><span>2025.05.12 09:57:00</span></div><div class="c" style="left:373px;width:106px"><span>sell</span></div><div class="c" style="left:479px;width:85px"><span>0.25</span></div><div class="c" style="left:564px;width:106px"><span>xauusd</span></div><div class="c" style="left:670px;width:106px"><span>3278.54</span></div><div class="c" style="left:776px;width:106px"><span>3276.14</span></div><div class="c" style="left:882px;width:106px"><span>0.00</span></div><div class="c" style="left:988px;width:235px"><span>2025.05.12 10:00:17</span></div><div class="c" style="left:1223px;width:106px"><span>3268.49</span></div><div class="c" style="left:1329px;width:106px"><span>0.00</span></div><div class="c" style="left:1435px;width:117px"><span>251.25</span></div><div class="c cm" style="left:1552px;width:331px"><span style="transform:scaleX(1.04)">to #201896628</span></div></div>
<div class="r" style="top:319px"><div class="c o b" style="left:0px;width:138px"><svg class="ic" viewBox="0 0 16 16"><path d="M1.5 1.5H8L11.5 5V14H1.5Z" fill="url(#pg)" stroke="#585858"/><path d="M8 1.5V5H11.5" fill="#fff" stroke="#585858"/><circle cx="10.4" cy="12.3" r="3.3" fill="url(#bb)" stroke="#0b4f98" stroke-width=".7"/></svg><span>201894997</span></div><div class="c" style="left:138px;width:235px"><span>2025.05.12 09:57:00</span></div><div class="c" style="left:373px;width:106px"><span>buy</span></div><div class="c" style="left:479px;width:85px"><span>0.50</span></div><div class="c" style="left:564px;width:106px"><span>xauusd</span></div><div class="c" style="left:670px;width:106px"><span>3278.61</span></div><div class="c pk" style="left:776px;width:106px"><span>3275.98</span></div><div class="c" style="left:882px;width:106px"><span>0.00</span></div><div class="c" style="left:988px;width:235px"><span>2025.05.12 10:00:04</span></div><div class="c" style="left:1223px;width:106px"><span>3275.98</span></div><div class="c" style="left:1329px;width:106px"><span>0.00</span></div><div class="c" style="left:1435px;width:117px"><span>-131.50</span></div><div class="c cm" style="left:1552px;width:331px"><span style="transform:scaleX(0.975)">HP1[sl]</span></div></div>
<div class="r g" style="top:340px"><div class="c o b" style="left:0px;width:138px"><svg class="ic" viewBox="0 0 16 16"><path d="M1.5 1.5H8L11.5 5V14H1.5Z" fill="url(#pg)" stroke="#585858"/><path d="M8 1.5V5H11.5" fill="#fff" stroke="#585858"/><circle cx="10.4" cy="12.3" r="3.3" fill="url(#bb)" stroke="#0b4f98" stroke-width=".7"/></svg><span>201892057</span></div><div class="c" style="left:138px;width:235px"><span>2025.05.12 09:43:00</span></div><div class="c" style="left:373px;width:106px"><span>buy</span></div><div class="c" style="left:479px;width:85px"><span>0.10</span></div><div class="c" style="left:564px;width:106px"><span>xauusd</span></div><div class="c" style="left:670px;width:106px"><span>3275.48</span></div><div class="c" style="left:776px;width:106px"><span>3267.80</span></div><div class="c" style="left:882px;width:106px"><span>0.00</span></div><div class="c" style="left:988px;width:235px"><span>2025.05.12 09:46:00</span></div><div class="c" style="left:1223px;width:106px"><span>3275.22</span></div><div class="c" style="left:1329px;width:106px"><span>0.00</span></div><div class="c" style="left:1435px;width:117px"><span>-2.60</span></div><div class="c cm" style="left:1552px;width:331px"><span style="transform:scaleX(0.863)">HP_EA</span></div></div>
<div class="r" style="top:361px"><div class="c o s" style="left:0px;width:138px"><svg class="ic" viewBox="0 0 16 16"><path d="M1.5 1.5H8L11.5 5V14H1.5Z" fill="url(#pg)" stroke="#585858"/><path d="M8 1.5V5H11.5" fill="#fff" stroke="#585858"/><circle cx="10.4" cy="12.3" r="3.3" fill="url(#rb)" stroke="#a82200" stroke-width=".7"/></svg><span>201892081</span></div><div class="c" style="left:138px;width:235px"><span>2025.05.12 09:43:01</span></div><div class="c" style="left:373px;width:106px"><span>sell</span></div><div class="c" style="left:479px;width:85px"><span>0.10</span></div><div class="c" style="left:564px;width:106px"><span>xauusd</span></div><div class="c" style="left:670px;width:106px"><span>3275.39</span></div><div class="c" style="left:776px;width:106px"><span>3278.50</span></div><div class="c" style="left:882px;width:106px"><span>0.00</span></div><div class="c" style="left:988px;width:235px"><span>2025.05.12 09:45:04</span></div><div class="c" style="left:1223px;width:106px"><span>3275.18</span></div><div class="c" style="left:1329px;width:106px"><span>0.00</span></div><div class="c" style="left:1435px;width:117px"><span>2.10</span></div><div class="c cm" style="left:1552px;width:331px"><span style="transform:scaleX(0.863)">HP_EA</span></div></div>
<div class="r g" style="top:382px"><div class="c o s" style="left:0px;width:138px"><svg class="ic" viewBox="0 0 16 16"><path d="M1.5 1.5H8L11.5 5V14H1.5Z" fill="url(#pg)" stroke="#585858"/><path d="M8 1.5V5H11.5" fill="#fff" stroke="#585858"/><circle cx="10.4" cy="12.3" r="3.3" fill="url(#rb)" stroke="#a82200" stroke-width=".7"/></svg><span>201890494</span></div><div class="c" style="left:138px;width:235px"><span>2025.05.12 09:34:01</span></div><div class="c" style="left:373px;width:106px"><span>sell</span></div><div class="c" style="left:479px;width:85px"><span>0.06</span></div><div class="c" style="left:564px;width:106px"><span>xauusd</span></div><div class="c" style="left:670px;width:106px"><span>3279.33</span></div><div class="c" style="left:776px;width:106px"><span>3286.31</span></div><div class="c" style="left:882px;width:106px"><span>0.00</span></div><div class="c" style="left:988px;width:235px"><span>2025.05.12 09:39:49</span></div><div class="c" style="left:1223px;width:106px"><span>3277.41</span></div><div class="c" style="left:1329px;width:106px"><span>0.00</span></div><div class="c" style="left:1435px;width:117px"><span>11.52</span></div><div class="c cm" style="left:1552px;width:331px"><span style="transform:scaleX(1.045)">from #201890479</span></div></div>
<div class="r" style="top:403px"><div class="c o b" style="left:0px;width:138px"><svg class="ic" viewBox="0 0 16 16"><path d="M1.5 1.5H8L11.5 5V14H1.5Z" fill="url(#pg)" stroke="#585858"/><path d="M8 1.5V5H11.5" fill="#fff" stroke="#585858"/><circle cx="10.4" cy="12.3" r="3.3" fill="url(#bb)" stroke="#0b4f98" stroke-width=".7"/></svg><span>201890478</span></div><div class="c" style="left:138px;width:235px"><span>2025.05.12 09:34:00</span></div><div class="c" style="left:373px;width:106px"><span>buy</span></div><div class="c" style="left:479px;width:85px"><span>0.10</span></div><div class="c" style="left:564px;width:106px"><span>xauusd</span></div><div class="c" style="left:670px;width:106px"><span>3279.47</span></div><div class="c pk" style="left:776px;width:106px"><span>3277.38</span></div><div class="c" style="left:882px;width:106px"><span>0.00</span></div><div class="c" style="left:988px;width:235px"><span>2025.05.12 09:39:03</span></div><div class="c" style="left:1223px;width:106px"><span>3277.38</span></div><div class="c" style="left:1329px;width:106px"><span>0.00</span></div><div class="c" style="left:1435px;width:117px"><span>-20.90</span></div><div class="c cm" style="left:1552px;width:331px"><span style="transform:scaleX(0.921)">HP_EA[sl]</span></div></div>
<div class="r g" style="top:424px"><div class="c o s" style="left:0px;width:138px"><svg class="ic" viewBox="0 0 16 16"><path d="M1.5 1.5H8L11.5 5V14H1.5Z" fill="url(#pg)" stroke="#585858"/><path d="M8 1.5V5H11.5" fill="#fff" stroke="#585858"/><circle cx="10.4" cy="12.3" r="3.3" fill="url(#rb)" stroke="#a82200" stroke-width=".7"/></svg><span>201890479</span></div><div class="c" style="left:138px;width:235px"><span>2025.05.12 09:34:01</span></div><div class="c" style="left:373px;width:106px"><span>sell</span></div><div class="c" style="left:479px;width:85px"><span>0.04</span></div><div class="c" style="left:564px;width:106px"><span>xauusd</span></div><div class="c" style="left:670px;width:106px"><span>3279.33</span></div><div class="c" style="left:776px;width:106px"><span>3289.36</span></div><div class="c" style="left:882px;width:106px"><span>0.00</span></div><div class="c" style="left:988px;width:235px"><span>2025.05.12 09:34:11</span></div><div class="c" style="left:1223px;width:106px"><span>3279.84</span></div><div class="c" style="left:1329px;width:106px"><span>0.00</span></div><div class="c" style="left:1435px;width:117px"><span>-2.04</span></div><div class="c cm" style="left:1552px;width:331px"><span style="transform:scaleX(1.04)">to #201890494</span></div></div>
<div class="r" style="top:445px"><div class="c o s" style="left:0px;width:138px"><svg class="ic" viewBox="0 0 16 16"><path d="M1.5 1.5H8L11.5 5V14H1.5Z" fill="url(#pg)" stroke="#585858"/><path d="M8 1.5V5H11.5" fill="#fff" stroke="#585858"/><circle cx="10.4" cy="12.3" r="3.3" fill="url(#rb)" stroke="#a82200" stroke-width=".7"/></svg><span>201888158</span></div><div class="c" style="left:138px;width:235px"><span>2025.05.12 09:25:23</span></div><div class="c" style="left:373px;width:106px"><span>sell</span></div><div class="c" style="left:479px;width:85px"><span>0.10</span></div><div class="c" style="left:564px;width:106px"><span>xauusd</span></div><div class="c" style="left:670px;width:106px"><span>3273.24</span></div><div class="c" style="left:776px;width:106px"><span>3278.14</span></div><div class="c" style="left:882px;width:106px"><span>0.00</span></div><div class="c" style="left:988px;width:235px"><span>2025.05.12 09:25:34</span></div><div class="c" style="left:1223px;width:106px"><span>3274.13</span></div><div class="c" style="left:1329px;width:106px"><span>0.00</span></div><div class="c" style="left:1435px;width:117px"><span>-8.90</span></div><div class="c cm" style="left:1552px;width:331px"><span style="transform:scaleX(0.84)">CS</span></div></div>
<div class="r g" style="top:466px"><div class="c o s" style="left:0px;width:138px"><svg class="ic" viewBox="0 0 16 16"><path d="M1.5 1.5H8L11.5 5V14H1.5Z" fill="url(#pg)" stroke="#585858"/><path d="M8 1.5V5H11.5" fill="#fff" stroke="#585858"/><circle cx="10.4" cy="12.3" r="3.3" fill="url(#rb)" stroke="#a82200" stroke-width=".7"/></svg><span>201887924</span></div><div class="c" style="left:138px;width:235px"><span>2025.05.12 09:25:01</span></div><div class="c" style="left:373px;width:106px"><span>sell</span></div><div class="c" style="left:479px;width:85px"><span>0.10</span></div><div class="c" style="left:564px;width:106px"><span>xauusd</span></div><div class="c" style="left:670px;width:106px"><span>3275.02</span></div><div class="c" style="left:776px;width:106px"><span>3278.14</span></div><div class="c" style="left:882px;width:106px"><span>0.00</span></div><div class="c" style="left:988px;width:235px"><span>2025.05.12 09:25:23</span></div><div class="c" style="left:1223px;width:106px"><span>3273.36</span></div><div class="c" style="left:1329px;width:106px"><span>0.00</span></div><div class="c" style="left:1435px;width:117px"><span>16.60</span></div><div class="c cm" style="left:1552px;width:331px"><span style="transform:scaleX(0.84)">CS</span></div></div>
<div class="r" style="top:487px"><div class="c o b" style="left:0px;width:138px"><svg class="ic" viewBox="0 0 16 16"><path d="M1.5 1.5H8L11.5 5V14H1.5Z" fill="url(#pg)" stroke="#585858"/><path d="M8 1.5V5H11.5" fill="#fff" stroke="#585858"/><circle cx="10.4" cy="12.3" r="3.3" fill="url(#bb)" stroke="#0b4f98" stroke-width=".7"/></svg><span>201884795</span></div><div class="c" style="left:138px;width:235px"><span>2025.05.12 09:09:38</span></div><div class="c" style="left:373px;width:106px"><span>buy</span></div><div class="c" style="left:479px;width:85px"><span>0.10</span></div><div class="c" style="left:564px;width:106px"><span>xauusd</span></div><div class="c" style="left:670px;width:106px"><span>3279.52</span></div><div class="c" style="left:776px;width:106px"><span>3274.64</span></div><div class="c" style="left:882px;width:106px"><span>0.00</span></div><div class="c" style="left:988px;width:235px"><span>2025.05.12 09:09:44</span></div><div class="c" style="left:1223px;width:106px"><span>3279.92</span></div><div class="c" style="left:1329px;width:106px"><span>0.00</span></div><div class="c" style="left:1435px;width:117px"><span>4.00</span></div><div class="c cm" style="left:1552px;width:331px"><span style="transform:scaleX(0.863)">HP_EA</span></div></div>
<div class="r g" style="top:508px"><div class="c o b" style="left:0px;width:138px"><svg class="ic" viewBox="0 0 16 16"><path d="M1.5 1.5H8L11.5 5V14H1.5Z" fill="url(#pg)" stroke="#585858"/><path d="M8 1.5V5H11.5" fill="#fff" stroke="#585858"/><circle cx="10.4" cy="12.3" r="3.3" fill="url(#bb)" stroke="#0b4f98" stroke-width=".7"/></svg><span>201884725</span></div><div class="c" style="left:138px;width:235px"><span>2025.05.12 09:09:14</span></div><div class="c" style="left:373px;width:106px"><span>buy</span></div><div class="c" style="left:479px;width:85px"><span>0.10</span></div><div class="c" style="left:564px;width:106px"><span>xauusd</span></div><div class="c" style="left:670px;width:106px"><span>3279.34</span></div><div class="c" style="left:776px;width:106px"><span>3274.64</span></div><div class="c" style="left:882px;width:106px"><span>0.00</span></div><div class="c" style="left:988px;width:235px"><span>2025.05.12 09:09:38</span></div><div class="c" style="left:1223px;width:106px"><span>3279.44</span></div><div class="c" style="left:1329px;width:106px"><span>0.00</span></div><div class="c" style="left:1435px;width:117px"><span>1.00</span></div><div class="c cm" style="left:1552px;width:331px"><span style="transform:scaleX(0.863)">HP_EA</span></div></div>
<div class="r" style="top:529px"><div class="c o b" style="left:0px;width:138px"><svg class="ic" viewBox="0 0 16 16"><path d="M1.5 1.5H8L11.5 5V14H1.5Z" fill="url(#pg)" stroke="#585858"/><path d="M8 1.5V5H11.5" fill="#fff" stroke="#585858"/><circle cx="10.4" cy="12.3" r="3.3" fill="url(#bb)" stroke="#0b4f98" stroke-width=".7"/></svg><span>201884701</span></div><div class="c" style="left:138px;width:235px"><span>2025.05.12 09:09:06</span></div><div class="c" style="left:373px;width:106px"><span>buy</span></div><div class="c" style="left:479px;width:85px"><span>0.10</span></div><div class="c" style="left:564px;width:106px"><span>xauusd</span></div><div class="c" style="left:670px;width:106px"><span>3279.01</span></div><div class="c" style="left:776px;width:106px"><span>3274.64</span></div><div class="c" style="left:882px;width:106px"><span>0.00</span></div><div class="c" style="left:988px;width:235px"><span>2025.05.12 09:09:13</span></div><div class="c" style="left:1223px;width:106px"><span>3279.26</span></div><div class="c" style="left:1329px;width:106px"><span>0.00</span></div><div class="c" style="left:1435px;width:117px"><span>2.50</span></div><div class="c cm" style="left:1552px;width:331px"><span style="transform:scaleX(0.863)">HP_EA</span></div></div>
<div class="r g" style="top:550px"><div class="c o s" style="left:0px;width:138px"><svg class="ic" viewBox="0 0 16 16"><path d="M1.5 1.5H8L11.5 5V14H1.5Z" fill="url(#pg)" stroke="#585858"/><path d="M8 1.5V5H11.5" fill="#fff" stroke="#585858"/><circle cx="10.4" cy="12.3" r="3.3" fill="url(#rb)" stroke="#a82200" stroke-width=".7"/></svg><span>201865415</span></div><div class="c" style="left:138px;width:235px"><span>2025.05.12 07:35:01</span></div><div class="c" style="left:373px;width:106px"><span>sell</span></div><div class="c" style="left:479px;width:85px"><span>0.15</span></div><div class="c" style="left:564px;width:106px"><span>xauusd</span></div><div class="c" style="left:670px;width:106px"><span>3278.54</span></div><div class="c" style="left:776px;width:106px"><span>3288.54</span></div><div class="c" style="left:882px;width:106px"><span>0.00</span></div><div class="c" style="left:988px;width:235px"><span>2025.05.12 09:05:02</span></div><div class="c" style="left:1223px;width:106px"><span>3277.91</span></div><div class="c" style="left:1329px;width:106px"><span>0.00</span></div><div class="c" style="left:1435px;width:117px"><span>9.45</span></div><div class="c cm" style="left:1552px;width:331px"><span style="transform:scaleX(0.893)">HP_56001_RESERVE_BB</span></div></div>
<div class="r" style="top:571px"><div class="c o s" style="left:0px;width:138px"><svg class="ic" viewBox="0 0 16 16"><path d="M1.5 1.5H8L11.5 5V14H1.5Z" fill="url(#pg)" stroke="#585858"/><path d="M8 1.5V5H11.5" fill="#fff" stroke="#585858"/><circle cx="10.4" cy="12.3" r="3.3" fill="url(#rb)" stroke="#a82200" stroke-width=".7"/></svg><span>201865418</span></div><div class="c" style="left:138px;width:235px"><span>2025.05.12 07:35:01</span></div><div class="c" style="left:373px;width:106px"><span>sell</span></div><div class="c" style="left:479px;width:85px"><span>0.04</span></div><div class="c" style="left:564px;width:106px"><span>xauusd</span></div><div class="c" style="left:670px;width:106px"><span>3278.54</span></div><div class="c" style="left:776px;width:106px"><span>3288.54</span></div><div class="c" style="left:882px;width:106px"><span>3268.54</span></div><div class="c" style="left:988px;width:235px"><span>2025.05.12 09:05:02</span></div><div class="c" style="left:1223px;width:106px"><span>3278.22</span></div><div class="c" style="left:1329px;width:106px"><span>0.00</span></div><div class="c" style="left:1435px;width:117px"><span>1.28</span></div><div class="c cm" style="left:1552px;width:331px"><span style="transform:scaleX(0.909)">HP_56002_SPLIT_BB1</span></div></div>
<div class="r g" style="top:592px"><div class="c o s" style="left:0px;width:138px"><svg class="ic" viewBox="0 0 16 16"><path d="M1.5 1.5H8L11.5 5V14H1.5Z" fill="url(#pg)" stroke="#585858"/><path d="M8 1.5V5H11.5" fill="#fff" stroke="#585858"/><circle cx="10.4" cy="12.3" r="3.3" fill="url(#rb)" stroke="#a82200" stroke-width=".7"/></svg><span>201865424</span></div><div class="c" style="left:138px;width:235px"><span>2025.05.12 07:35:01</span></div><div class="c" style="left:373px;width:106px"><span>sell</span></div><div class="c" style="left:479px;width:85px"><span>0.04</span></div><div class="c" style="left:564px;width:106px"><span>xauusd</span></div><div class="c" style="left:670px;width:106px"><span>3278.54</span></div><div class="c" style="left:776px;width:106px"><span>3288.54</span></div><div class="c" style="left:882px;width:106px"><span>3268.54</span></div><div class="c" style="left:988px;width:235px"><span>2025.05.12 09:05:02</span></div><div class="c" style="left:1223px;width:106px"><span>3278.22</span></div><div class="c" style="left:1329px;width:106px"><span>0.00</span></div><div class="c" style="left:1435px;width:117px"><span>1.28</span></div><div class="c cm" style="left:1552px;width:331px"><span style="transform:scaleX(0.909)">HP_56001_SPLIT_BB1</span></div></div>
<div class="r" style="top:613px"><div class="c o s" style="left:0px;width:138px"><svg class="ic" viewBox="0 0 16 16"><path d="M1.5 1.5H8L11.5 5V14H1.5Z" fill="url(#pg)" stroke="#585858"/><path d="M8 1.5V5H11.5" fill="#fff" stroke="#585858"/><circle cx="10.4" cy="12.3" r="3.3" fill="url(#rb)" stroke="#a82200" stroke-width=".7"/></svg><span>201865425</span></div><div class="c" style="left:138px;width:235px"><span>2025.05.12 07:35:01</span></div><div class="c" style="left:373px;width:106px"><span>sell</span></div><div class="c" style="left:479px;width:85px"><span>0.04</span></div><div class="c" style="left:564px;width:106px"><span>xauusd</span></div><div class="c" style="left:670px;width:106px"><span>3278.54</span></div><div class="c" style="left:776px;width:106px"><span>3288.54</span></div><div class="c" style="left:882px;width:106px"><span>3263.54</span></div><div class="c" style="left:988px;width:235px"><span>2025.05.12 09:05:02</span></div><div class="c" style="left:1223px;width:106px"><span>3278.22</span></div><div class="c" style="left:1329px;width:106px"><span>0.00</span></div><div class="c" style="left:1435px;width:117px"><span>1.28</span></div><div class="c cm" style="left:1552px;width:331px"><span style="transform:scaleX(0.909)">HP_56002_SPLIT_BB2</span></div></div>
<div class="r g" style="top:634px"><div class="c o s" style="left:0px;width:138px"><svg class="ic" viewBox="0 0 16 16"><path d="M1.5 1.5H8L11.5 5V14H1.5Z" fill="url(#pg)" stroke="#585858"/><path d="M8 1.5V5H11.5" fill="#fff" stroke="#585858"/><circle cx="10.4" cy="12.3" r="3.3" fill="url(#rb)" stroke="#a82200" stroke-width=".7"/></svg><span>201865426</span></div><div class="c" style="left:138px;width:235px"><span>2025.05.12 07:35:01</span></div><div class="c" style="left:373px;width:106px"><span>sell</span></div><div class="c" style="left:479px;width:85px"><span>0.04</span></div><div class="c" style="left:564px;width:106px"><span>xauusd</span></div><div class="c" style="left:670px;width:106px"><span>3278.54</span></div><div class="c" style="left:776px;width:106px"><span>3288.54</span></div><div class="c" style="left:882px;width:106px"><span>3263.54</span></div><div class="c" style="left:988px;width:235px"><span>2025.05.12 09:05:02</span></div><div class="c" style="left:1223px;width:106px"><span>3278.22</span></div><div class="c" style="left:1329px;width:106px"><span>0.00</span></div><div class="c" style="left:1435px;width:117px"><span>1.28</span></div><div class="c cm" style="left:1552px;width:331px"><span style="transform:scaleX(0.909)">HP_56001_SPLIT_BB2</span></div></div>
<div class="r" style="top:655px"><div class="c o s" style="left:0px;width:138px"><svg class="ic" viewBox="0 0 16 16"><path d="M1.5 1.5H8L11.5 5V14H1.5Z" fill="url(#pg)" stroke="#585858"/><path d="M8 1.5V5H11.5" fill="#fff" stroke="#585858"/><circle cx="10.4" cy="12.3" r="3.3" fill="url(#rb)" stroke="#a82200" stroke-width=".7"/></svg><span>201865427</span></div><div class="c" style="left:138px;width:235px"><span>2025.05.12 07:35:02</span></div><div class="c" style="left:373px;width:106px"><span>sell</span></div><div class="c" style="left:479px;width:85px"><span>0.04</span></div><div class="c" style="left:564px;width:106px"><span>xauusd</span></div><div class="c" style="left:670px;width:106px"><span>3278.54</span></div><div class="c" style="left:776px;width:106px"><span>3288.54</span></div><div class="c" style="left:882px;width:106px"><span>3258.54</span></div><div class="c" style="left:988px;width:235px"><span>2025.05.12 09:05:02</span></div><div class="c" style="left:1223px;width:106px"><span>3278.23</span></div><div class="c" style="left:1329px;width:106px"><span>0.00</span></div><div class="c" style="left:1435px;width:117px"><span>1.24</span></div><div class="c cm" style="left:1552px;width:331px"><span style="transform:scaleX(0.909)">HP_56002_SPLIT_BB3</span></div></div>
<div class="r g" style="top:676px"><div class="c o s" style="left:0px;width:138px"><svg class="ic" viewBox="0 0 16 16"><path d="M1.5 1.5H8L11.5 5V14H1.5Z" fill="url(#pg)" stroke="#585858"/><path d="M8 1.5V5H11.5" fill="#fff" stroke="#585858"/><circle cx="10.4" cy="12.3" r="3.3" fill="url(#rb)" stroke="#a82200" stroke-width=".7"/></svg><span>201865428</span></div><div class="c" style="left:138px;width:235px"><span>2025.05.12 07:35:02</span></div><div class="c" style="left:373px;width:106px"><span>sell</span></div><div class="c" style="left:479px;width:85px"><span>0.04</span></div><div class="c" style="left:564px;width:106px"><span>xauusd</span></div><div class="c" style="left:670px;width:106px"><span>3278.54</span></div><div class="c" style="left:776px;width:106px"><span>3288.54</span></div><div class="c" style="left:882px;width:106px"><span>3258.54</span></div><div class="c" style="left:988px;width:235px"><span>2025.05.12 09:05:02</span></div><div class="c" style="left:1223px;width:106px"><span>3278.23</span></div><div class="c" style="left:1329px;width:106px"><span>0.00</span></div><div class="c" style="left:1435px;width:117px"><span>1.24</span></div><div class="c cm" style="left:1552px;width:331px"><span style="transform:scaleX(0.909)">HP_56001_SPLIT_BB3</span></div></div>
<div class="r" style="top:697px"><div class="c o s" style="left:0px;width:138px"><svg class="ic" viewBox="0 0 16 16"><path d="M1.5 1.5H8L11.5 5V14H1.5Z" fill="url(#pg)" stroke="#585858"/><path d="M8 1.5V5H11.5" fill="#fff" stroke="#585858"/><circle cx="10.4" cy="12.3" r="3.3" fill="url(#rb)" stroke="#a82200" stroke-width=".7"/></svg><span>201865429</span></div><div class="c" style="left:138px;width:235px"><span>2025.05.12 07:35:02</span></div><div class="c" style="left:373px;width:106px"><span>sell</span></div><div class="c" style="left:479px;width:85px"><span>0.04</span></div><div class="c" style="left:564px;width:106px"><span>xauusd</span></div><div class="c" style="left:670px;width:106px"><span>3278.54</span></div><div class="c" style="left:776px;width:106px"><span>3288.54</span></div><div class="c" style="left:882px;width:106px"><span>3253.54</span></div><div class="c" style="left:988px;width:235px"><span>2025.05.12 09:05:02</span></div><div class="c" style="left:1223px;width:106px"><span>3278.24</span></div><div class="c" style="left:1329px;width:106px"><span>0.00</span></div><div class="c" style="left:1435px;width:117px"><span>1.20</span></div><div class="c cm" style="left:1552px;width:331px"><span style="transform:scaleX(0.909)">HP_56002_SPLIT_BB4</span></div></div>
<div class="r g" style="top:718px"><div class="c o s" style="left:0px;width:138px"><svg class="ic" viewBox="0 0 16 16"><path d="M1.5 1.5H8L11.5 5V14H1.5Z" fill="url(#pg)" stroke="#585858"/><path d="M8 1.5V5H11.5" fill="#fff" stroke="#585858"/><circle cx="10.4" cy="12.3" r="3.3" fill="url(#rb)" stroke="#a82200" stroke-width=".7"/></svg><span>201865430</span></div><div class="c" style="left:138px;width:235px"><span>2025.05.12 07:35:02</span></div><div class="c" style="left:373px;width:106px"><span>sell</span></div><div class="c" style="left:479px;width:85px"><span>0.04</span></div><div class="c" style="left:564px;width:106px"><span>xauusd</span></div><div class="c" style="left:670px;width:106px"><span>3278.54</span></div><div class="c" style="left:776px;width:106px"><span>3288.54</span></div><div class="c" style="left:882px;width:106px"><span>3253.54</span></div><div class="c" style="left:988px;width:235px"><span>2025.05.12 09:05:02</span></div><div class="c" style="left:1223px;width:106px"><span>3278.24</span></div><div class="c" style="left:1329px;width:106px"><span>0.00</span></div><div class="c" style="left:1435px;width:117px"><span>1.20</span></div><div class="c cm" style="left:1552px;width:331px"><span style="transform:scaleX(0.909)">HP_56001_SPLIT_BB4</span></div></div>
<div class="r" style="top:739px"><div class="c o s" style="left:0px;width:138px"><svg class="ic" viewBox="0 0 16 16"><path d="M1.5 1.5H8L11.5 5V14H1.5Z" fill="url(#pg)" stroke="#585858"/><path d="M8 1.5V5H11.5" fill="#fff" stroke="#585858"/><circle cx="10.4" cy="12.3" r="3.3" fill="url(#rb)" stroke="#a82200" stroke-width=".7"/></svg><span>201865431</span></div><div class="c" style="left:138px;width:235px"><span>2025.05.12 07:35:02</span></div><div class="c" style="left:373px;width:106px"><span>sell</span></div><div class="c" style="left:479px;width:85px"><span>0.04</span></div><div class="c" style="left:564px;width:106px"><span>xauusd</span></div><div class="c" style="left:670px;width:106px"><span>3278.54</span></div><div class="c" style="left:776px;width:106px"><span>3288.54</span></div><div class="c" style="left:882px;width:106px"><span>3248.54</span></div><div class="c" style="left:988px;width:235px"><span>2025.05.12 09:05:01</span></div><div class="c" style="left:1223px;width:106px"><span>3278.24</span></div><div class="c" style="left:1329px;width:106px"><span>0.00</span></div><div class="c" style="left:1435px;width:117px"><span>1.20</span></div><div class="c cm" style="left:1552px;width:331px"><span style="transform:scaleX(0.909)">HP_56002_SPLIT_BB5</span></div></div>
</div>
<!-- table scrollbar -->
<div class="abs" style="left:1896px;top:138px;width:4px;height:749px;background:#f0f0f0"></div>
<div class="abs" style="left:1897px;top:155px;width:3px;height:36px;background:#c1c1c1"></div>

<svg class="abs" style="left:0;top:886px;z-index:3" width="11" height="21" viewBox="0 0 11 21" shape-rendering="crispEdges"><rect width="11" height="21" fill="#fff"/><rect x="0" y="2" width="2" height="1" fill="#111"/><rect x="6" y="2" width="2" height="1" fill="#111"/><rect x="8" y="2" width="1" height="2" fill="#111"/><rect x="10" y="2" width="2" height="1" fill="#111"/><rect x="0" y="4" width="1" height="2" fill="#111"/><rect x="2" y="4" width="1" height="1" fill="#111"/><rect x="6" y="4" width="1" height="1" fill="#111"/><rect x="10" y="4" width="1" height="1" fill="#111"/><rect x="2" y="6" width="1" height="2" fill="#111"/><rect x="8" y="6" width="2" height="1" fill="#111"/><rect x="2" y="8" width="2" height="2" fill="#111"/><rect x="4" y="8" width="1" height="2" fill="#111"/><rect x="6" y="8" width="2" height="2" fill="#111"/><rect x="2" y="10" width="2" height="2" fill="#111"/><rect x="4" y="10" width="2" height="1" fill="#111"/><rect x="6" y="10" width="2" height="1" fill="#111"/><rect x="8" y="10" width="1" height="2" fill="#111"/><rect x="10" y="10" width="2" height="1" fill="#111"/><rect x="0" y="12" width="2" height="2" fill="#111"/><rect x="2" y="12" width="1" height="2" fill="#111"/><rect x="4" y="12" width="1" height="2" fill="#111"/><rect x="8" y="12" width="1" height="2" fill="#111"/><rect x="10" y="12" width="2" height="2" fill="#111"/><rect x="0" y="14" width="2" height="1" fill="#111"/><rect x="6" y="14" width="2" height="1" fill="#111"/><rect x="8" y="14" width="1" height="1" fill="#111"/><rect x="10" y="14" width="2" height="2" fill="#111"/><rect x="2" y="16" width="2" height="2" fill="#111"/><rect x="4" y="16" width="2" height="2" fill="#111"/><rect x="6" y="16" width="1" height="2" fill="#111"/><rect x="8" y="16" width="2" height="2" fill="#111"/><rect x="0" y="18" width="1" height="1" fill="#111"/><rect x="4" y="18" width="2" height="1" fill="#111"/><rect x="6" y="18" width="2" height="2" fill="#111"/><rect x="10" y="18" width="2" height="1" fill="#111"/><rect x="0" y="20" width="2" height="1" fill="#111"/><rect x="4" y="20" width="1" height="1" fill="#111"/><rect x="10" y="20" width="2" height="1" fill="#111"/></svg>
<!-- overlay -->
<div class="abs" style="left:0;top:733px;width:40px;height:75px;background:rgba(45,45,45,.62)"></div>
<div class="abs" style="left:0;top:770px;color:#fff;font-size:19px;font-weight:bold;line-height:24px;font-family:'Liberation Sans',sans-serif">6</div>

<!-- bottom tabs -->
<div id="bt">
  <div class="abs" style="left:12px;top:0;width:1888px;height:1px;background:#000"></div>
  <div class="tabs" style="left:0;top:1px;width:1900px;height:21px">
    <div class="t" style="left:25px">交易</div><div class="sp" style="left:59px;top:3px;height:15px"></div>
    <div class="t" style="left:68px">展示</div>
    <div class="a" style="left:103px;top:-1px;width:68px;height:22px;line-height:21px">账户历史</div>
    <div class="t" style="left:180px">新闻</div><div class="t" style="left:207px;top:5px;color:#e00000;font-size:10px;font-weight:bold">4</div><div class="sp" style="left:222px;top:3px;height:15px"></div>
    <div class="t" style="left:233px">警报</div><div class="sp" style="left:267px;top:3px;height:15px"></div>
    <div class="t" style="left:277px">邮箱</div><div class="t" style="left:303px;top:5px;color:#e00000;font-size:10px;font-weight:bold">6</div><div class="sp" style="left:319px;top:3px;height:15px"></div>
    <div class="t" style="left:329px">市场</div><div class="sp" style="left:363px;top:3px;height:15px"></div>
    <div class="t" style="left:373px">文章</div><div class="sp" style="left:407px;top:3px;height:15px"></div>
    <div class="t" style="left:417px">代码库</div><div class="sp" style="left:463px;top:3px;height:15px"></div>
    <div class="t" style="left:473px;font-size:12.5px">EA</div><div class="sp" style="left:498px;top:3px;height:15px"></div>
    <div class="t" style="left:508px">日志</div><div class="sp" style="left:542px;top:3px;height:15px"></div>
  </div>
</div>

<!-- watermark -->
<svg class="abs" style="left:0;top:0;pointer-events:none" width="1909" height="908" viewBox="0 0 1909 908" font-family="Liberation Sans, sans-serif" font-weight="bold" font-size="36" fill="#ffffff" fill-opacity=".11" stroke="#000000" stroke-opacity=".2" stroke-width="1">
<text transform="translate(59,184) rotate(-32)">EAHub.cn</text>
<text transform="translate(309,184) rotate(-32)">EAHub.cn</text>
<text transform="translate(559,184) rotate(-32)">EAHub.cn</text>
<text transform="translate(809,184) rotate(-32)">EAHub.cn</text>
<text transform="translate(1059,184) rotate(-32)">EAHub.cn</text>
<text transform="translate(1309,184) rotate(-32)">EAHub.cn</text>
<text transform="translate(1559,184) rotate(-32)">EAHub.cn</text>
<text transform="translate(1809,184) rotate(-32)">EAHub.cn</text>
<text transform="translate(59,431) rotate(-32)">EAHub.cn</text>
<text transform="translate(309,431) rotate(-32)">EAHub.cn</text>
<text transform="translate(559,431) rotate(-32)">EAHub.cn</text>
<text transform="translate(809,431) rotate(-32)">EAHub.cn</text>
<text transform="translate(1059,431) rotate(-32)">EAHub.cn</text>
<text transform="translate(1309,431) rotate(-32)">EAHub.cn</text>
<text transform="translate(1559,431) rotate(-32)">EAHub.cn</text>
<text transform="translate(1809,431) rotate(-32)">EAHub.cn</text>
<text transform="translate(59,678) rotate(-32)">EAHub.cn</text>
<text transform="translate(309,678) rotate(-32)">EAHub.cn</text>
<text transform="translate(559,678) rotate(-32)">EAHub.cn</text>
<text transform="translate(809,678) rotate(-32)">EAHub.cn</text>
<text transform="translate(1059,678) rotate(-32)">EAHub.cn</text>
<text transform="translate(1309,678) rotate(-32)">EAHub.cn</text>
<text transform="translate(1559,678) rotate(-32)">EAHub.cn</text>
<text transform="translate(1809,678) rotate(-32)">EAHub.cn</text>
<text transform="translate(59,925) rotate(-32)">EAHub.cn</text>
<text transform="translate(309,925) rotate(-32)">EAHub.cn</text>
<text transform="translate(559,925) rotate(-32)">EAHub.cn</text>
<text transform="translate(809,925) rotate(-32)">EAHub.cn</text>
<text transform="translate(1059,925) rotate(-32)">EAHub.cn</text>
<text transform="translate(1309,925) rotate(-32)">EAHub.cn</text>
<text transform="translate(1559,925) rotate(-32)">EAHub.cn</text>
<text transform="translate(1809,925) rotate(-32)">EAHub.cn</text>
</svg>
</body>
</html>
